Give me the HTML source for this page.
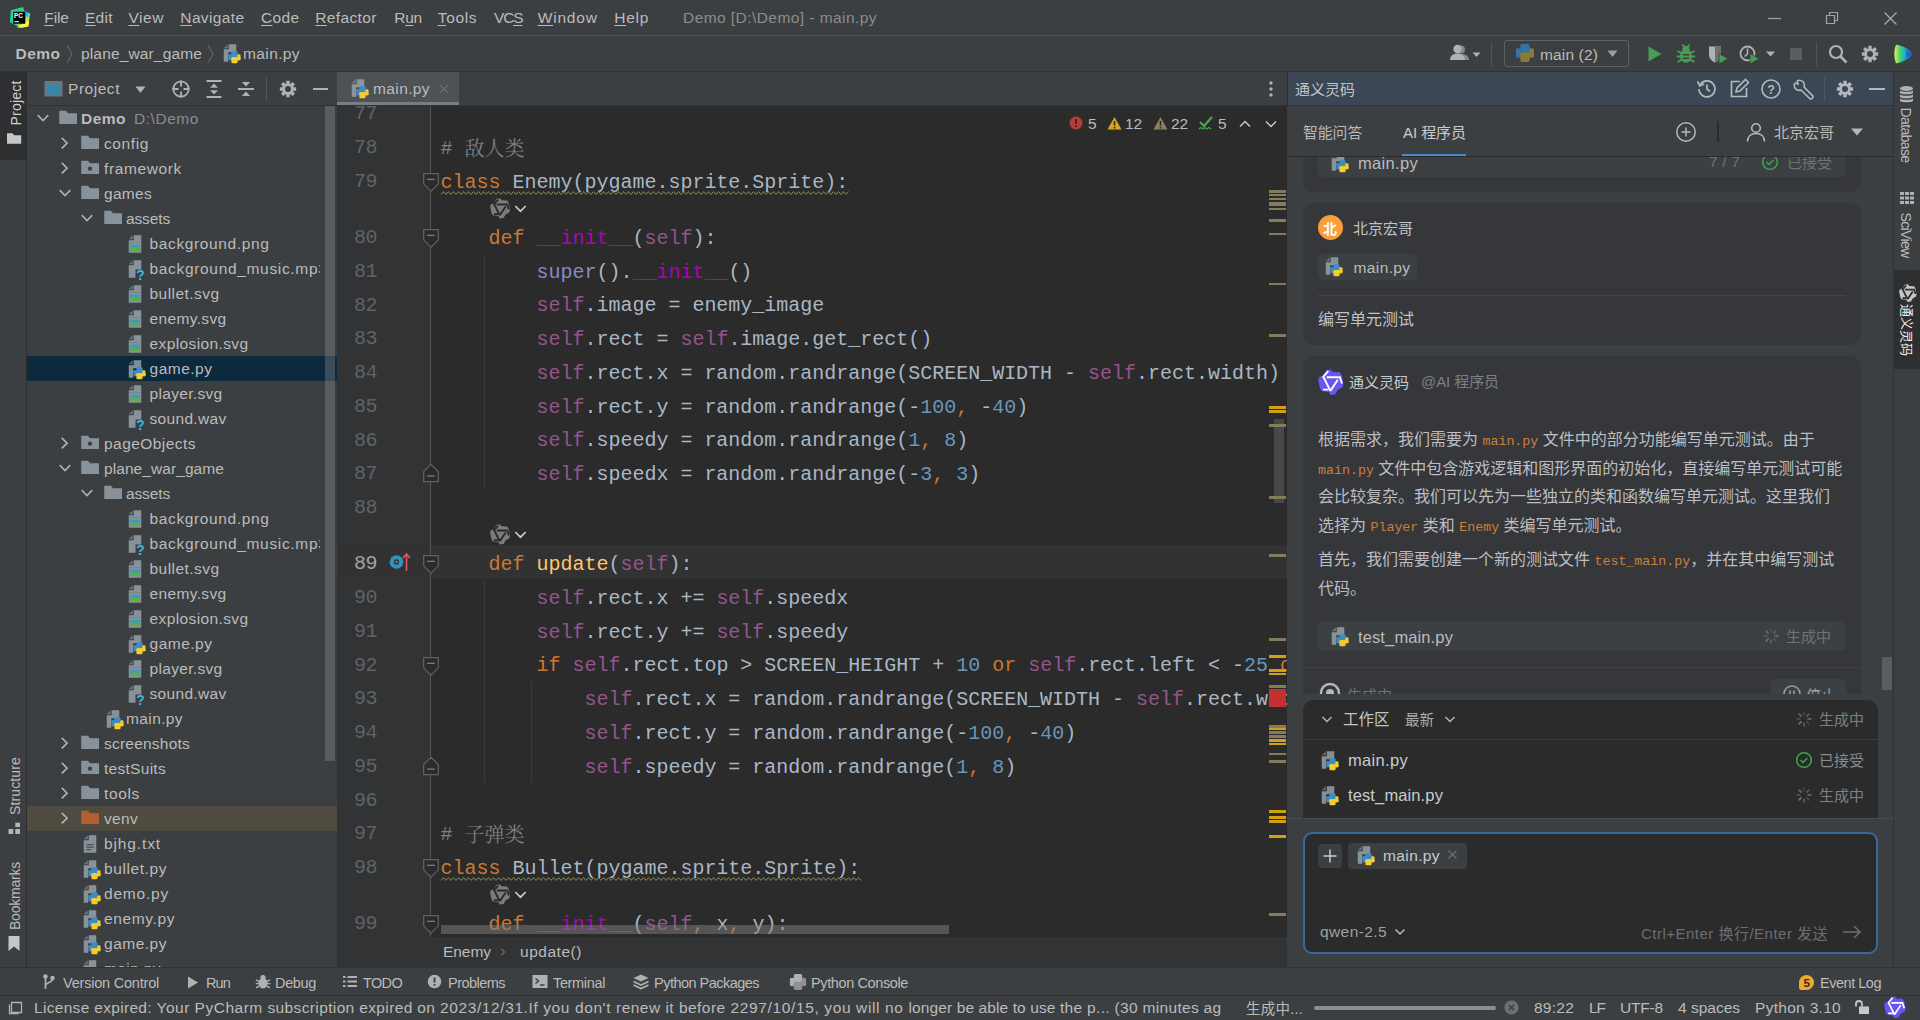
<!DOCTYPE html>
<html lang="zh"><head><meta charset="utf-8"><title>Demo [D:\Demo] - main.py</title>
<style>
html,body{margin:0;padding:0;background:#3c3f41;overflow:hidden}
body{width:1920px;height:1020px;position:relative;font-family:"Liberation Sans","Noto Sans CJK SC",sans-serif;color:#bbbbbb;font-size:16.4px}
.b{position:absolute}
.t{position:absolute;white-space:pre}
.i{position:absolute;overflow:visible}
.c{position:absolute;overflow:hidden}
u{text-decoration:underline;text-underline-offset:2px;text-decoration-thickness:1px}
.m{font-family:"Liberation Mono","Noto Serif CJK SC",monospace;font-size:20px;color:#a9b7c6}
.k{color:#cc7832}.s{color:#94558d}.d{color:#b200b2}.n{color:#6897bb}.f{color:#ffc66d}.bi{color:#8888c6}.cm{color:#808080}
.ln{position:absolute;left:0;width:40px;text-align:right;font-family:"Liberation Mono",monospace;font-size:20px;letter-spacing:-.5px;color:#606366;line-height:34px;height:34px}
.cl{position:absolute;left:103.6px;letter-spacing:-0.012px;white-space:pre;font-family:"Liberation Mono","Noto Serif CJK SC",monospace;font-size:20px;color:#a9b7c6;line-height:34px;height:34px}
.wv{text-decoration:underline wavy #8d8a5e;text-decoration-thickness:1px;text-underline-offset:5px;text-decoration-skip-ink:none}
.zh{position:relative;top:2px}
.ic{font-family:"Liberation Mono","Noto Serif CJK SC",monospace;font-size:13.3px;color:#c9803e}
.p{position:absolute;left:30px;width:540px;font-size:16px;line-height:28.7px;color:#bcbec4;white-space:pre}
</style></head>
<body>
<div class="b" style="left:0px;top:35px;width:1920px;height:1px;background:#505355;"></div>
<svg class="i" style="left:8.8px;top:7.4px" width="20.8" height="20.8" viewBox="0 0 22 22" ><defs><linearGradient id="pg1" x1="0" y1="0" x2="1" y2="1"><stop offset="0" stop-color="#21d789"/><stop offset=".55" stop-color="#21d789"/><stop offset=".75" stop-color="#b8e84e"/><stop offset="1" stop-color="#fcf84a"/></linearGradient></defs><path d="M2 3.500L15 0l1 4 5.500 2.500-1 13.500-8 2-11.500-6z" fill="url(#pg1)"/><path d="M16 4l5.500 2.500-.5 4-5-1z" fill="#07c3f2"/><path d="M8 21.500l12.500-6.500.5-8.500 1 .5-1.500 13.500-7.500 1.500z" fill="#fcf84a"/><rect x="4.500" y="5" width="12.700" height="12.700" fill="#000"/><text x="5.300" y="11.400" font-family="Liberation Sans,sans-serif" font-weight="700" font-size="6.800" fill="#fff">PC</text><rect x="5.800" y="15" width="4.600" height="1.100" fill="#fff"/></svg>
<span class="t" style="left:44.3px;top:6.0px;line-height:24px;font-size:15.5px;letter-spacing:-0.144px;color:#bbbbbb;"><u>F</u>ile</span>
<span class="t" style="left:85px;top:6.0px;line-height:24px;font-size:15.5px;letter-spacing:0.247px;color:#bbbbbb;"><u>E</u>dit</span>
<span class="t" style="left:128.5px;top:6.0px;line-height:24px;font-size:15.5px;letter-spacing:0.546px;color:#bbbbbb;"><u>V</u>iew</span>
<span class="t" style="left:180.3px;top:6.0px;line-height:24px;font-size:15.5px;letter-spacing:0.378px;color:#bbbbbb;"><u>N</u>avigate</span>
<span class="t" style="left:261px;top:6.0px;line-height:24px;font-size:15.5px;letter-spacing:0.311px;color:#bbbbbb;"><u>C</u>ode</span>
<span class="t" style="left:315.3px;top:6.0px;line-height:24px;font-size:15.5px;letter-spacing:0.352px;color:#bbbbbb;"><u>R</u>efactor</span>
<span class="t" style="left:394.3px;top:6.0px;line-height:24px;font-size:15.5px;letter-spacing:-0.345px;color:#bbbbbb;">R<u>u</u>n</span>
<span class="t" style="left:437.7px;top:6.0px;line-height:24px;font-size:15.5px;letter-spacing:0.683px;color:#bbbbbb;"><u>T</u>ools</span>
<span class="t" style="left:494px;top:6.0px;line-height:24px;font-size:15.5px;letter-spacing:-1.191px;color:#bbbbbb;">VC<u>S</u></span>
<span class="t" style="left:537.7px;top:6.0px;line-height:24px;font-size:15.5px;letter-spacing:0.812px;color:#bbbbbb;"><u>W</u>indow</span>
<span class="t" style="left:614.3px;top:6.0px;line-height:24px;font-size:15.5px;letter-spacing:0.705px;color:#bbbbbb;"><u>H</u>elp</span>
<span class="t" style="left:683px;top:6.0px;line-height:24px;font-size:15.5px;letter-spacing:0.439px;color:#8c8c8c;">Demo [D:\Demo] - main.py</span>
<svg class="i" style="left:1764px;top:8px" width="20" height="20" viewBox="0 0 20 20" ><path d="M4 10.500h13" stroke="#a0a3a5" stroke-width="1.200"/></svg>
<svg class="i" style="left:1822px;top:8px" width="20" height="20" viewBox="0 0 20 20" ><path d="M4.500 7.500h8v8h-8zM7.500 7.500v-3h8v8h-3" fill="none" stroke="#a0a3a5" stroke-width="1.200"/></svg>
<svg class="i" style="left:1880px;top:8px" width="20" height="20" viewBox="0 0 20 20" ><path d="M4.500 4.500l12 12M16.500 4.500l-12 12" stroke="#a8abad" stroke-width="1.200"/></svg>
<div class="b" style="left:0px;top:71px;width:1920px;height:1px;background:#323232;"></div>
<span class="t" style="left:15.5px;top:41.5px;line-height:24px;font-size:15.5px;letter-spacing:0.484px;color:#bbbbbb;font-weight:700;">Demo</span>
<svg class="i" style="left:64px;top:42px" width="12" height="24" viewBox="0 0 12 24" ><path d="M3 3l5 9-5 9" fill="none" stroke="#6b6e70" stroke-width="1"/></svg>
<span class="t" style="left:81px;top:41.5px;line-height:24px;font-size:15.5px;letter-spacing:0.149px;">plane_war_game</span>
<svg class="i" style="left:205px;top:42px" width="12" height="24" viewBox="0 0 12 24" ><path d="M3 3l5 9-5 9" fill="none" stroke="#6b6e70" stroke-width="1"/></svg>
<svg class="i" style="left:220px;top:42.5px" width="22.5" height="22.5" viewBox="0 0 18 18" ><path d="M7 1h6v6.400H6.600V15H3V5h4z" fill="#9aa7b0" fill-opacity=".8"/><path d="M6.200 1L3 4.200h3.200z" fill="#9aa7b0" fill-opacity=".5"/><rect x="9.10" y="6.60" width="4.99" height="4.90" rx="1.06" fill="#3d8cc4"/><rect x="6.80" y="9.00" width="7.30" height="2.50" rx="0.86" fill="#3d8cc4"/><rect x="6.80" y="9.00" width="2.59" height="4.90" rx="1.06" fill="#3d8cc4"/><rect x="9.10" y="11.30" width="4.99" height="4.90" rx="1.06" fill="#f6cd2e"/><rect x="9.10" y="11.30" width="7.30" height="2.50" rx="0.86" fill="#f6cd2e"/><rect x="13.81" y="8.90" width="2.59" height="4.90" rx="1.06" fill="#f6cd2e"/></svg>
<span class="t" style="left:243px;top:41.5px;line-height:24px;font-size:15.5px;letter-spacing:0.389px;">main.py</span>
<svg class="i" style="left:1449px;top:43px" width="34" height="22" viewBox="0 0 34 22" ><circle cx="12" cy="6.500" r="4" fill="#7f8b91"/><path d="M4 17c0-4.500 4-6 8-6s8 1.500 8 6z" fill="#7f8b91"/><circle cx="8.500" cy="6" r="4.200" fill="#afb1b3"/><path d="M1 17c0-4 3-6.500 7.500-6.500S16 13 16 17z" fill="#afb1b3"/><path d="M23.500 9.500h8l-4 4.500z" fill="#afb1b3"/></svg>
<div class="b" style="left:1491px;top:42px;width:1px;height:24px;background:#515355;"></div>
<div class="b" style="left:1504px;top:40px;width:125px;height:27px;border:1px solid #5e6163;border-radius:3px;box-sizing:border-box"></div>
<svg class="i" style="left:1515px;top:43px" width="20" height="20" viewBox="0 0 10 10" ><rect x="2.66" y="0.50" width="4.68" height="4.59" rx="0.99" fill="#3572a5"/><rect x="0.50" y="2.75" width="6.84" height="2.34" rx="0.81" fill="#3572a5"/><rect x="0.50" y="2.75" width="2.43" height="4.59" rx="0.99" fill="#3572a5"/><rect x="2.66" y="4.91" width="4.68" height="4.59" rx="0.99" fill="#8a7a33"/><rect x="2.66" y="4.91" width="6.84" height="2.34" rx="0.81" fill="#8a7a33"/><rect x="7.07" y="2.66" width="2.43" height="4.59" rx="0.99" fill="#8a7a33"/></svg>
<span class="t" style="left:1540px;top:43.0px;line-height:24px;font-size:15.5px;letter-spacing:0.144px;">main (2)</span>
<svg class="i" style="left:1606px;top:49px" width="14" height="10" viewBox="0 0 14 10" ><path d="M1.500 1.500h10L6.500 8z" fill="#9da0a2"/></svg>
<svg class="i" style="left:1645px;top:44px" width="20" height="20" viewBox="0 0 20 20" ><path d="M3.500 2.500l13 7.500-13 7.500z" fill="#499c54"/></svg>
<svg class="i" style="left:1675px;top:43px" width="22" height="22" viewBox="0 0 22 22" ><ellipse cx="11" cy="13" rx="6" ry="6.800" fill="#499c54"/><circle cx="11" cy="6.300" r="3.600" fill="#499c54"/><path d="M2.500 8l4.500 2.500M19.500 8L15 10.500M1.800 13.500h5M20.200 13.500h-5M2.500 19l4.500-2.500M19.500 19L15 16.500M7.300 1.500l2 2.500M14.700 1.500l-2 2.500" stroke="#499c54" stroke-width="2"/><path d="M7.800 11.800h6.400M7.800 15.200h6.400" stroke="#3c3f41" stroke-width="1.500"/></svg>
<svg class="i" style="left:1707px;top:43px" width="24" height="24" viewBox="0 0 24 24" ><path d="M2 3.500h12v8c0 4-3 6.500-6 8-3-1.500-6-4-6-8z" fill="#afb1b3"/><path d="M8 3.500h6v8c0 4-3 6.500-6 8z" fill="#6e7173"/><path d="M12 10.500l9 5.200-9 5.300z" fill="#499c54" stroke="#3c3f41" stroke-width=".8"/></svg>
<svg class="i" style="left:1738px;top:43px" width="24" height="24" viewBox="0 0 24 24" ><circle cx="9.500" cy="10.500" r="7" fill="none" stroke="#afb1b3" stroke-width="1.800"/><path d="M9.500 5.500v5.500l-3 2.500" fill="none" stroke="#afb1b3" stroke-width="1.600"/><path d="M12 10.500l9 5.200-9 5.300z" fill="#499c54" stroke="#3c3f41" stroke-width=".8"/></svg>
<svg class="i" style="left:1765px;top:50px" width="12" height="8" viewBox="0 0 12 8" ><path d="M1 1.500h9L5.500 6.500z" fill="#afb1b3"/></svg>
<div class="b" style="left:1790px;top:48px;width:12px;height:12px;background:#5a5d5f;"></div>
<div class="b" style="left:1816px;top:42px;width:1px;height:24px;background:#515355;"></div>
<svg class="i" style="left:1827px;top:43px" width="22" height="22" viewBox="0 0 22 22" ><circle cx="9" cy="9" r="6" fill="none" stroke="#afb1b3" stroke-width="2.200"/><path d="M13.500 13.500l6 6" stroke="#afb1b3" stroke-width="2.600"/></svg>
<svg class="i" style="left:1861px;top:45px" width="18" height="18" viewBox="0 0 20 20" ><rect x="8.100" y="0.900" width="3.800" height="4.500" rx=".5" fill="#afb1b3" transform="rotate(0 10 10)"/><rect x="8.100" y="0.900" width="3.800" height="4.500" rx=".5" fill="#afb1b3" transform="rotate(45 10 10)"/><rect x="8.100" y="0.900" width="3.800" height="4.500" rx=".5" fill="#afb1b3" transform="rotate(90 10 10)"/><rect x="8.100" y="0.900" width="3.800" height="4.500" rx=".5" fill="#afb1b3" transform="rotate(135 10 10)"/><rect x="8.100" y="0.900" width="3.800" height="4.500" rx=".5" fill="#afb1b3" transform="rotate(180 10 10)"/><rect x="8.100" y="0.900" width="3.800" height="4.500" rx=".5" fill="#afb1b3" transform="rotate(225 10 10)"/><rect x="8.100" y="0.900" width="3.800" height="4.500" rx=".5" fill="#afb1b3" transform="rotate(270 10 10)"/><rect x="8.100" y="0.900" width="3.800" height="4.500" rx=".5" fill="#afb1b3" transform="rotate(315 10 10)"/><circle cx="10" cy="10" r="6.500" fill="#afb1b3"/><circle cx="10" cy="10" r="3.300" fill="#3c3f41"/></svg>
<svg class="i" style="left:1893px;top:43px" width="22" height="22" viewBox="0 0 22 22" ><defs><linearGradient id="cg1" x1="0" y1="0" x2="1" y2="0"><stop offset="0" stop-color="#e6ee4c"/><stop offset=".35" stop-color="#35d07c"/><stop offset=".7" stop-color="#1c9fe0"/><stop offset="1" stop-color="#2a55c8"/></linearGradient></defs><path d="M3 1.800C9 2 18 7.500 19.500 11 18 14.500 9 20 3 20.200 .8 15 .8 7 3 1.800z" fill="url(#cg1)"/><path d="M12 5.500L19.500 11 12 16.500c1.500-3 1.500-8 0-11z" fill="#1d4fb8" fill-opacity=".55"/></svg>
<div class="b" style="left:0px;top:72px;width:26px;height:88px;background:#2d2f30;"></div>
<div class="b" style="left:26px;top:72px;width:1px;height:895px;background:#2b2d2e;"></div>
<span class="t" style="left:-7.5px;top:92.5px;line-height:20px;font-size:14px;letter-spacing:0.204px;color:#d0d2d3;transform:rotate(-90deg);transform-origin:50% 50%;width:45px;">Project</span>
<svg class="i" style="left:5px;top:130px" width="18" height="18" viewBox="0 0 16 16" ><path d="M1.800 2.800h4.800l1.500 1.800H14.400V12.200H1.800z" fill="#c4c6c8"/></svg>
<span class="t" style="left:-14.0px;top:776.0px;line-height:20px;font-size:14px;letter-spacing:0.133px;color:#bbbbbb;transform:rotate(-90deg);transform-origin:50% 50%;width:58px;">Structure</span>
<svg class="i" style="left:8px;top:822px" width="13" height="13" viewBox="0 0 13 13" ><rect x="7.300" y=".7" width="4.700" height="4.400" fill="#b2b4b6"/><rect x=".5" y="7" width="4.800" height="5" fill="#b2b4b6"/><rect x="7.300" y="7" width="4.700" height="5" fill="#b2b4b6"/></svg>
<span class="t" style="left:-19.0px;top:886.0px;line-height:20px;font-size:14px;letter-spacing:-0.225px;color:#bbbbbb;transform:rotate(-90deg);transform-origin:50% 50%;width:68px;">Bookmarks</span>
<svg class="i" style="left:7px;top:935px" width="14" height="17" viewBox="0 0 14 17" ><path d="M1.500 1h11v15l-5.500-4.500L1.500 16z" fill="#c4c6c8"/></svg>
<div class="b" style="left:28px;top:105px;width:309px;height:1px;background:#323232;"></div>
<svg class="i" style="left:44px;top:79px" width="22" height="20" viewBox="0 0 22 20" ><rect x=".5" y="2" width="18" height="15.500" fill="#6c767d"/><rect x="2.500" y="5.500" width="14" height="10" fill="#3488ae"/></svg>
<span class="t" style="left:68px;top:77.0px;line-height:24px;font-size:15.5px;letter-spacing:0.537px;color:#bbbbbb;">Project</span>
<svg class="i" style="left:134px;top:85px" width="14" height="10" viewBox="0 0 14 10" ><path d="M1.500 1.500h10L6.500 8z" fill="#afb1b3"/></svg>
<svg class="i" style="left:171px;top:79px" width="20" height="20" viewBox="0 0 20 20" ><circle cx="10" cy="10" r="7.700" fill="none" stroke="#afb1b3" stroke-width="1.800"/><path d="M10 1.500v6M10 12.500v6M1.500 10h6M12.500 10h6" stroke="#afb1b3" stroke-width="1.800"/></svg>
<svg class="i" style="left:204px;top:79px" width="20" height="20" viewBox="0 0 20 20" ><path d="M2.500 2h15M2.500 18h15" stroke="#afb1b3" stroke-width="2"/><path d="M10 4.500l4 4.200h-8zM10 15.500l4-4.200h-8z" fill="#afb1b3"/></svg>
<svg class="i" style="left:236px;top:79px" width="20" height="20" viewBox="0 0 20 20" ><path d="M2 10h16" stroke="#afb1b3" stroke-width="2"/><path d="M10 7.500l4.200-4.500h-8.400zM10 12.500l4.200 4.500h-8.400z" fill="#afb1b3"/></svg>
<div class="b" style="left:266px;top:77px;width:1px;height:24px;background:#515355;"></div>
<svg class="i" style="left:279px;top:80px" width="18" height="18" viewBox="0 0 20 20" ><rect x="8.100" y="0.900" width="3.800" height="4.500" rx=".5" fill="#afb1b3" transform="rotate(0 10 10)"/><rect x="8.100" y="0.900" width="3.800" height="4.500" rx=".5" fill="#afb1b3" transform="rotate(45 10 10)"/><rect x="8.100" y="0.900" width="3.800" height="4.500" rx=".5" fill="#afb1b3" transform="rotate(90 10 10)"/><rect x="8.100" y="0.900" width="3.800" height="4.500" rx=".5" fill="#afb1b3" transform="rotate(135 10 10)"/><rect x="8.100" y="0.900" width="3.800" height="4.500" rx=".5" fill="#afb1b3" transform="rotate(180 10 10)"/><rect x="8.100" y="0.900" width="3.800" height="4.500" rx=".5" fill="#afb1b3" transform="rotate(225 10 10)"/><rect x="8.100" y="0.900" width="3.800" height="4.500" rx=".5" fill="#afb1b3" transform="rotate(270 10 10)"/><rect x="8.100" y="0.900" width="3.800" height="4.500" rx=".5" fill="#afb1b3" transform="rotate(315 10 10)"/><circle cx="10" cy="10" r="6.500" fill="#afb1b3"/><circle cx="10" cy="10" r="3.300" fill="#3c3f41"/></svg>
<svg class="i" style="left:311px;top:79px" width="20" height="20" viewBox="0 0 20 20" ><path d="M2 10h15" stroke="#afb1b3" stroke-width="2"/></svg>
<div class="c" style="left:27px;top:106px;width:310px;height:861px"><div class="b" style="left:1px;top:0">
<div class="b" style="left:-1px;top:250px;width:310px;height:25px;background:#0d293e;"></div>
<div class="b" style="left:-1px;top:700px;width:310px;height:25px;background:#4f4b41;"></div>
<svg class="i" style="left:3.5px;top:1.7px" width="20" height="20" viewBox="0 0 16 16" ><path d="M4.600 5.700L8.800 10 13 5.700" fill="none" stroke="#aeb0b2" stroke-width="1.3"/></svg>
<svg class="i" style="left:29.75px;top:1.3px" width="20" height="20" viewBox="0 0 16 16" ><path d="M1 3h5.400l1.600 2H15.200v8.500H1z" fill="#9aa7b0" fill-opacity=".8"/></svg>
<span class="t" style="left:53px;top:0.5px;line-height:24px;font-size:15.5px;letter-spacing:0.484px;font-weight:700;">Demo</span>
<span class="t" style="left:106px;top:0.5px;line-height:24px;font-size:15.5px;letter-spacing:0.55px;color:#8a8d8f;">D:\Demo</span>
<svg class="i" style="left:26px;top:26.7px" width="20" height="20" viewBox="0 0 16 16" ><path d="M6.200 3.900L10.500 8.100 6.200 12.300" fill="none" stroke="#aeb0b2" stroke-width="1.3"/></svg>
<svg class="i" style="left:51.75px;top:26.3px" width="20" height="20" viewBox="0 0 16 16" ><path d="M1 3h5.400l1.600 2H15.200v8.500H1z" fill="#9aa7b0" fill-opacity=".8"/></svg>
<span class="t" style="left:76px;top:25.5px;line-height:24px;font-size:15.5px;letter-spacing:0.606px;">config</span>
<svg class="i" style="left:26px;top:51.7px" width="20" height="20" viewBox="0 0 16 16" ><path d="M6.200 3.900L10.500 8.100 6.200 12.300" fill="none" stroke="#aeb0b2" stroke-width="1.3"/></svg>
<svg class="i" style="left:51.75px;top:51.3px" width="20" height="20" viewBox="0 0 16 16" ><path d="M1 3h5.400l1.600 2H15.200v8.500H1z" fill="#9aa7b0" fill-opacity=".8"/><circle cx="8" cy="9.300" r="1.700" fill="#3c3f41"/></svg>
<span class="t" style="left:76px;top:50.5px;line-height:24px;font-size:15.5px;letter-spacing:0.628px;">framework</span>
<svg class="i" style="left:26px;top:76.7px" width="20" height="20" viewBox="0 0 16 16" ><path d="M4.600 5.700L8.800 10 13 5.700" fill="none" stroke="#aeb0b2" stroke-width="1.3"/></svg>
<svg class="i" style="left:51.75px;top:76.3px" width="20" height="20" viewBox="0 0 16 16" ><path d="M1 3h5.400l1.600 2H15.200v8.500H1z" fill="#9aa7b0" fill-opacity=".8"/></svg>
<span class="t" style="left:76px;top:75.5px;line-height:24px;font-size:15.5px;letter-spacing:0.295px;">games</span>
<svg class="i" style="left:48px;top:101.7px" width="20" height="20" viewBox="0 0 16 16" ><path d="M4.600 5.700L8.800 10 13 5.700" fill="none" stroke="#aeb0b2" stroke-width="1.3"/></svg>
<svg class="i" style="left:74.75px;top:101.3px" width="20" height="20" viewBox="0 0 16 16" ><path d="M1 3h5.400l1.600 2H15.200v8.500H1z" fill="#9aa7b0" fill-opacity=".8"/></svg>
<span class="t" style="left:98px;top:100.5px;line-height:24px;font-size:15.5px;letter-spacing:-0.133px;">assets</span>
<svg class="i" style="left:97px;top:127.5px" width="20" height="20" viewBox="0 0 16 16" ><path d="M7 1h6v6H3V5h4z" fill="#9aa7b0" fill-opacity=".8"/><path d="M6.200 1L3 4.200h3.200z" fill="#9aa7b0" fill-opacity=".5"/><rect x="3" y="7" width="10" height="8" fill="#9aa7b0" fill-opacity=".8"/><rect x="4.300" y="8.600" width="7.500" height="5" fill="#3a9ac4"/><path d="M4.300 13.600v-2.200l2.300-1.500L9 11.400l1.400-.8 1.400 1.300v1.700z" fill="#5fae43"/></svg>
<span class="t" style="left:121.5px;top:125.5px;line-height:24px;font-size:15.5px;letter-spacing:0.63px;">background.png</span>
<svg class="i" style="left:97px;top:152.5px" width="22.5" height="22.5" viewBox="0 0 18 18" ><path d="M7 1h6v7.400H8.400V15H3V5h4z" fill="#9aa7b0" fill-opacity=".8"/><path d="M6.200 1L3 4.200h3.200z" fill="#9aa7b0" fill-opacity=".5"/><text x="9" y="17" font-family="Liberation Sans,sans-serif" font-weight="700" font-size="11" fill="#40b6e0">?</text></svg>
<span class="t" style="left:121.5px;top:150.5px;line-height:24px;font-size:15.5px;letter-spacing:0.672px;">background_music.mp3</span>
<svg class="i" style="left:97px;top:177.5px" width="20" height="20" viewBox="0 0 16 16" ><path d="M7 1h6v6H3V5h4z" fill="#9aa7b0" fill-opacity=".8"/><path d="M6.200 1L3 4.200h3.200z" fill="#9aa7b0" fill-opacity=".5"/><rect x="3" y="7" width="10" height="8" fill="#9aa7b0" fill-opacity=".8"/><rect x="4.300" y="8.600" width="7.500" height="5" fill="#3a9ac4"/><path d="M4.300 13.600v-2.200l2.300-1.500L9 11.400l1.400-.8 1.400 1.300v1.700z" fill="#5fae43"/></svg>
<span class="t" style="left:121.5px;top:175.5px;line-height:24px;font-size:15.5px;letter-spacing:0.452px;">bullet.svg</span>
<svg class="i" style="left:97px;top:202.5px" width="20" height="20" viewBox="0 0 16 16" ><path d="M7 1h6v6H3V5h4z" fill="#9aa7b0" fill-opacity=".8"/><path d="M6.200 1L3 4.200h3.200z" fill="#9aa7b0" fill-opacity=".5"/><rect x="3" y="7" width="10" height="8" fill="#9aa7b0" fill-opacity=".8"/><rect x="4.300" y="8.600" width="7.500" height="5" fill="#3a9ac4"/><path d="M4.300 13.600v-2.200l2.300-1.500L9 11.400l1.400-.8 1.400 1.300v1.700z" fill="#5fae43"/></svg>
<span class="t" style="left:121.5px;top:200.5px;line-height:24px;font-size:15.5px;letter-spacing:0.356px;">enemy.svg</span>
<svg class="i" style="left:97px;top:227.5px" width="20" height="20" viewBox="0 0 16 16" ><path d="M7 1h6v6H3V5h4z" fill="#9aa7b0" fill-opacity=".8"/><path d="M6.200 1L3 4.200h3.200z" fill="#9aa7b0" fill-opacity=".5"/><rect x="3" y="7" width="10" height="8" fill="#9aa7b0" fill-opacity=".8"/><rect x="4.300" y="8.600" width="7.500" height="5" fill="#3a9ac4"/><path d="M4.300 13.600v-2.200l2.300-1.500L9 11.400l1.400-.8 1.400 1.300v1.700z" fill="#5fae43"/></svg>
<span class="t" style="left:121.5px;top:225.5px;line-height:24px;font-size:15.5px;letter-spacing:0.391px;">explosion.svg</span>
<svg class="i" style="left:97px;top:252.5px" width="22.5" height="22.5" viewBox="0 0 18 18" ><path d="M7 1h6v6.400H6.600V15H3V5h4z" fill="#9aa7b0" fill-opacity=".8"/><path d="M6.200 1L3 4.200h3.200z" fill="#9aa7b0" fill-opacity=".5"/><rect x="9.10" y="6.60" width="4.99" height="4.90" rx="1.06" fill="#3d8cc4"/><rect x="6.80" y="9.00" width="7.30" height="2.50" rx="0.86" fill="#3d8cc4"/><rect x="6.80" y="9.00" width="2.59" height="4.90" rx="1.06" fill="#3d8cc4"/><rect x="9.10" y="11.30" width="4.99" height="4.90" rx="1.06" fill="#f6cd2e"/><rect x="9.10" y="11.30" width="7.30" height="2.50" rx="0.86" fill="#f6cd2e"/><rect x="13.81" y="8.90" width="2.59" height="4.90" rx="1.06" fill="#f6cd2e"/></svg>
<span class="t" style="left:121.5px;top:250.5px;line-height:24px;font-size:15.5px;letter-spacing:0.507px;">game.py</span>
<svg class="i" style="left:97px;top:277.5px" width="20" height="20" viewBox="0 0 16 16" ><path d="M7 1h6v6H3V5h4z" fill="#9aa7b0" fill-opacity=".8"/><path d="M6.200 1L3 4.200h3.200z" fill="#9aa7b0" fill-opacity=".5"/><rect x="3" y="7" width="10" height="8" fill="#9aa7b0" fill-opacity=".8"/><rect x="4.300" y="8.600" width="7.500" height="5" fill="#3a9ac4"/><path d="M4.300 13.600v-2.200l2.300-1.500L9 11.400l1.400-.8 1.400 1.300v1.700z" fill="#5fae43"/></svg>
<span class="t" style="left:121.5px;top:275.5px;line-height:24px;font-size:15.5px;letter-spacing:0.321px;">player.svg</span>
<svg class="i" style="left:97px;top:302.5px" width="22.5" height="22.5" viewBox="0 0 18 18" ><path d="M7 1h6v7.400H8.400V15H3V5h4z" fill="#9aa7b0" fill-opacity=".8"/><path d="M6.200 1L3 4.200h3.200z" fill="#9aa7b0" fill-opacity=".5"/><text x="9" y="17" font-family="Liberation Sans,sans-serif" font-weight="700" font-size="11" fill="#40b6e0">?</text></svg>
<span class="t" style="left:121.5px;top:300.5px;line-height:24px;font-size:15.5px;letter-spacing:0.322px;">sound.wav</span>
<svg class="i" style="left:26px;top:326.7px" width="20" height="20" viewBox="0 0 16 16" ><path d="M6.200 3.900L10.500 8.100 6.200 12.300" fill="none" stroke="#aeb0b2" stroke-width="1.3"/></svg>
<svg class="i" style="left:51.75px;top:326.3px" width="20" height="20" viewBox="0 0 16 16" ><path d="M1 3h5.400l1.600 2H15.200v8.500H1z" fill="#9aa7b0" fill-opacity=".8"/><circle cx="8" cy="9.300" r="1.700" fill="#3c3f41"/></svg>
<span class="t" style="left:76px;top:325.5px;line-height:24px;font-size:15.5px;letter-spacing:0.452px;">pageObjects</span>
<svg class="i" style="left:26px;top:351.7px" width="20" height="20" viewBox="0 0 16 16" ><path d="M4.600 5.700L8.800 10 13 5.700" fill="none" stroke="#aeb0b2" stroke-width="1.3"/></svg>
<svg class="i" style="left:51.75px;top:351.3px" width="20" height="20" viewBox="0 0 16 16" ><path d="M1 3h5.400l1.600 2H15.200v8.500H1z" fill="#9aa7b0" fill-opacity=".8"/></svg>
<span class="t" style="left:76px;top:350.5px;line-height:24px;font-size:15.5px;letter-spacing:0.078px;">plane_war_game</span>
<svg class="i" style="left:48px;top:376.7px" width="20" height="20" viewBox="0 0 16 16" ><path d="M4.600 5.700L8.800 10 13 5.700" fill="none" stroke="#aeb0b2" stroke-width="1.3"/></svg>
<svg class="i" style="left:74.75px;top:376.3px" width="20" height="20" viewBox="0 0 16 16" ><path d="M1 3h5.400l1.600 2H15.200v8.500H1z" fill="#9aa7b0" fill-opacity=".8"/></svg>
<span class="t" style="left:98px;top:375.5px;line-height:24px;font-size:15.5px;letter-spacing:-0.133px;">assets</span>
<svg class="i" style="left:97px;top:402.5px" width="20" height="20" viewBox="0 0 16 16" ><path d="M7 1h6v6H3V5h4z" fill="#9aa7b0" fill-opacity=".8"/><path d="M6.200 1L3 4.200h3.200z" fill="#9aa7b0" fill-opacity=".5"/><rect x="3" y="7" width="10" height="8" fill="#9aa7b0" fill-opacity=".8"/><rect x="4.300" y="8.600" width="7.500" height="5" fill="#3a9ac4"/><path d="M4.300 13.600v-2.200l2.300-1.500L9 11.400l1.400-.8 1.400 1.300v1.700z" fill="#5fae43"/></svg>
<span class="t" style="left:121.5px;top:400.5px;line-height:24px;font-size:15.5px;letter-spacing:0.63px;">background.png</span>
<svg class="i" style="left:97px;top:427.5px" width="22.5" height="22.5" viewBox="0 0 18 18" ><path d="M7 1h6v7.400H8.400V15H3V5h4z" fill="#9aa7b0" fill-opacity=".8"/><path d="M6.200 1L3 4.200h3.200z" fill="#9aa7b0" fill-opacity=".5"/><text x="9" y="17" font-family="Liberation Sans,sans-serif" font-weight="700" font-size="11" fill="#40b6e0">?</text></svg>
<span class="t" style="left:121.5px;top:425.5px;line-height:24px;font-size:15.5px;letter-spacing:0.672px;">background_music.mp3</span>
<svg class="i" style="left:97px;top:452.5px" width="20" height="20" viewBox="0 0 16 16" ><path d="M7 1h6v6H3V5h4z" fill="#9aa7b0" fill-opacity=".8"/><path d="M6.200 1L3 4.200h3.200z" fill="#9aa7b0" fill-opacity=".5"/><rect x="3" y="7" width="10" height="8" fill="#9aa7b0" fill-opacity=".8"/><rect x="4.300" y="8.600" width="7.500" height="5" fill="#3a9ac4"/><path d="M4.300 13.600v-2.200l2.300-1.500L9 11.400l1.400-.8 1.400 1.300v1.700z" fill="#5fae43"/></svg>
<span class="t" style="left:121.5px;top:450.5px;line-height:24px;font-size:15.5px;letter-spacing:0.452px;">bullet.svg</span>
<svg class="i" style="left:97px;top:477.5px" width="20" height="20" viewBox="0 0 16 16" ><path d="M7 1h6v6H3V5h4z" fill="#9aa7b0" fill-opacity=".8"/><path d="M6.200 1L3 4.200h3.200z" fill="#9aa7b0" fill-opacity=".5"/><rect x="3" y="7" width="10" height="8" fill="#9aa7b0" fill-opacity=".8"/><rect x="4.300" y="8.600" width="7.500" height="5" fill="#3a9ac4"/><path d="M4.300 13.600v-2.200l2.300-1.500L9 11.400l1.400-.8 1.400 1.300v1.700z" fill="#5fae43"/></svg>
<span class="t" style="left:121.5px;top:475.5px;line-height:24px;font-size:15.5px;letter-spacing:0.356px;">enemy.svg</span>
<svg class="i" style="left:97px;top:502.5px" width="20" height="20" viewBox="0 0 16 16" ><path d="M7 1h6v6H3V5h4z" fill="#9aa7b0" fill-opacity=".8"/><path d="M6.200 1L3 4.200h3.200z" fill="#9aa7b0" fill-opacity=".5"/><rect x="3" y="7" width="10" height="8" fill="#9aa7b0" fill-opacity=".8"/><rect x="4.300" y="8.600" width="7.500" height="5" fill="#3a9ac4"/><path d="M4.300 13.600v-2.200l2.300-1.500L9 11.400l1.400-.8 1.400 1.300v1.700z" fill="#5fae43"/></svg>
<span class="t" style="left:121.5px;top:500.5px;line-height:24px;font-size:15.5px;letter-spacing:0.391px;">explosion.svg</span>
<svg class="i" style="left:97px;top:527.5px" width="22.5" height="22.5" viewBox="0 0 18 18" ><path d="M7 1h6v6.400H6.600V15H3V5h4z" fill="#9aa7b0" fill-opacity=".8"/><path d="M6.200 1L3 4.200h3.200z" fill="#9aa7b0" fill-opacity=".5"/><rect x="9.10" y="6.60" width="4.99" height="4.90" rx="1.06" fill="#3d8cc4"/><rect x="6.80" y="9.00" width="7.30" height="2.50" rx="0.86" fill="#3d8cc4"/><rect x="6.80" y="9.00" width="2.59" height="4.90" rx="1.06" fill="#3d8cc4"/><rect x="9.10" y="11.30" width="4.99" height="4.90" rx="1.06" fill="#f6cd2e"/><rect x="9.10" y="11.30" width="7.30" height="2.50" rx="0.86" fill="#f6cd2e"/><rect x="13.81" y="8.90" width="2.59" height="4.90" rx="1.06" fill="#f6cd2e"/></svg>
<span class="t" style="left:121.5px;top:525.5px;line-height:24px;font-size:15.5px;letter-spacing:0.507px;">game.py</span>
<svg class="i" style="left:97px;top:552.5px" width="20" height="20" viewBox="0 0 16 16" ><path d="M7 1h6v6H3V5h4z" fill="#9aa7b0" fill-opacity=".8"/><path d="M6.200 1L3 4.200h3.200z" fill="#9aa7b0" fill-opacity=".5"/><rect x="3" y="7" width="10" height="8" fill="#9aa7b0" fill-opacity=".8"/><rect x="4.300" y="8.600" width="7.500" height="5" fill="#3a9ac4"/><path d="M4.300 13.600v-2.200l2.300-1.500L9 11.400l1.400-.8 1.400 1.300v1.700z" fill="#5fae43"/></svg>
<span class="t" style="left:121.5px;top:550.5px;line-height:24px;font-size:15.5px;letter-spacing:0.321px;">player.svg</span>
<svg class="i" style="left:97px;top:577.5px" width="22.5" height="22.5" viewBox="0 0 18 18" ><path d="M7 1h6v7.400H8.400V15H3V5h4z" fill="#9aa7b0" fill-opacity=".8"/><path d="M6.200 1L3 4.200h3.200z" fill="#9aa7b0" fill-opacity=".5"/><text x="9" y="17" font-family="Liberation Sans,sans-serif" font-weight="700" font-size="11" fill="#40b6e0">?</text></svg>
<span class="t" style="left:121.5px;top:575.5px;line-height:24px;font-size:15.5px;letter-spacing:0.322px;">sound.wav</span>
<svg class="i" style="left:74.5px;top:602.5px" width="22.5" height="22.5" viewBox="0 0 18 18" ><path d="M7 1h6v6.400H6.600V15H3V5h4z" fill="#9aa7b0" fill-opacity=".8"/><path d="M6.200 1L3 4.200h3.200z" fill="#9aa7b0" fill-opacity=".5"/><rect x="9.10" y="6.60" width="4.99" height="4.90" rx="1.06" fill="#3d8cc4"/><rect x="6.80" y="9.00" width="7.30" height="2.50" rx="0.86" fill="#3d8cc4"/><rect x="6.80" y="9.00" width="2.59" height="4.90" rx="1.06" fill="#3d8cc4"/><rect x="9.10" y="11.30" width="4.99" height="4.90" rx="1.06" fill="#f6cd2e"/><rect x="9.10" y="11.30" width="7.30" height="2.50" rx="0.86" fill="#f6cd2e"/><rect x="13.81" y="8.90" width="2.59" height="4.90" rx="1.06" fill="#f6cd2e"/></svg>
<span class="t" style="left:98px;top:600.5px;line-height:24px;font-size:15.5px;letter-spacing:0.389px;">main.py</span>
<svg class="i" style="left:26px;top:626.7px" width="20" height="20" viewBox="0 0 16 16" ><path d="M6.200 3.900L10.500 8.100 6.200 12.300" fill="none" stroke="#aeb0b2" stroke-width="1.3"/></svg>
<svg class="i" style="left:51.75px;top:626.3px" width="20" height="20" viewBox="0 0 16 16" ><path d="M1 3h5.400l1.600 2H15.200v8.500H1z" fill="#9aa7b0" fill-opacity=".8"/></svg>
<span class="t" style="left:76px;top:625.5px;line-height:24px;font-size:15.5px;letter-spacing:0.221px;">screenshots</span>
<svg class="i" style="left:26px;top:651.7px" width="20" height="20" viewBox="0 0 16 16" ><path d="M6.200 3.900L10.500 8.100 6.200 12.300" fill="none" stroke="#aeb0b2" stroke-width="1.3"/></svg>
<svg class="i" style="left:51.75px;top:651.3px" width="20" height="20" viewBox="0 0 16 16" ><path d="M1 3h5.400l1.600 2H15.200v8.500H1z" fill="#9aa7b0" fill-opacity=".8"/><circle cx="8" cy="9.300" r="1.700" fill="#3c3f41"/></svg>
<span class="t" style="left:76px;top:650.5px;line-height:24px;font-size:15.5px;letter-spacing:0.284px;">testSuits</span>
<svg class="i" style="left:26px;top:676.7px" width="20" height="20" viewBox="0 0 16 16" ><path d="M6.200 3.900L10.500 8.100 6.200 12.300" fill="none" stroke="#aeb0b2" stroke-width="1.3"/></svg>
<svg class="i" style="left:51.75px;top:676.3px" width="20" height="20" viewBox="0 0 16 16" ><path d="M1 3h5.400l1.600 2H15.200v8.500H1z" fill="#9aa7b0" fill-opacity=".8"/></svg>
<span class="t" style="left:76px;top:675.5px;line-height:24px;font-size:15.5px;letter-spacing:0.652px;">tools</span>
<svg class="i" style="left:26px;top:701.7px" width="20" height="20" viewBox="0 0 16 16" ><path d="M6.200 3.900L10.500 8.100 6.200 12.300" fill="none" stroke="#aeb0b2" stroke-width="1.3"/></svg>
<svg class="i" style="left:51.75px;top:701.3px" width="20" height="20" viewBox="0 0 16 16" ><path d="M1 3h5.400l1.600 2H15.200v8.500H1z" fill="#b35f30" fill-opacity="1"/></svg>
<span class="t" style="left:76px;top:700.5px;line-height:24px;font-size:15.5px;letter-spacing:0.315px;">venv</span>
<svg class="i" style="left:52.2px;top:727.5px" width="20" height="20" viewBox="0 0 16 16" ><path d="M7 1h6v14H3V5h4z" fill="#9aa7b0" fill-opacity=".8"/><path d="M6.200 1L3 4.200h3.200z" fill="#9aa7b0" fill-opacity=".5"/><path d="M5 8.400h6M5 10.400h6M5 12.400h3.800" stroke="#4a4f54" stroke-width="1"/></svg>
<span class="t" style="left:76px;top:725.5px;line-height:24px;font-size:15.5px;letter-spacing:0.878px;">bjhg.txt</span>
<svg class="i" style="left:52.2px;top:752.5px" width="22.5" height="22.5" viewBox="0 0 18 18" ><path d="M7 1h6v6.400H6.600V15H3V5h4z" fill="#9aa7b0" fill-opacity=".8"/><path d="M6.200 1L3 4.200h3.200z" fill="#9aa7b0" fill-opacity=".5"/><rect x="9.10" y="6.60" width="4.99" height="4.90" rx="1.06" fill="#3d8cc4"/><rect x="6.80" y="9.00" width="7.30" height="2.50" rx="0.86" fill="#3d8cc4"/><rect x="6.80" y="9.00" width="2.59" height="4.90" rx="1.06" fill="#3d8cc4"/><rect x="9.10" y="11.30" width="4.99" height="4.90" rx="1.06" fill="#f6cd2e"/><rect x="9.10" y="11.30" width="7.30" height="2.50" rx="0.86" fill="#f6cd2e"/><rect x="13.81" y="8.90" width="2.59" height="4.90" rx="1.06" fill="#f6cd2e"/></svg>
<span class="t" style="left:76px;top:750.5px;line-height:24px;font-size:15.5px;letter-spacing:0.585px;">bullet.py</span>
<svg class="i" style="left:52.2px;top:777.5px" width="22.5" height="22.5" viewBox="0 0 18 18" ><path d="M7 1h6v6.400H6.600V15H3V5h4z" fill="#9aa7b0" fill-opacity=".8"/><path d="M6.200 1L3 4.200h3.200z" fill="#9aa7b0" fill-opacity=".5"/><rect x="9.10" y="6.60" width="4.99" height="4.90" rx="1.06" fill="#3d8cc4"/><rect x="6.80" y="9.00" width="7.30" height="2.50" rx="0.86" fill="#3d8cc4"/><rect x="6.80" y="9.00" width="2.59" height="4.90" rx="1.06" fill="#3d8cc4"/><rect x="9.10" y="11.30" width="4.99" height="4.90" rx="1.06" fill="#f6cd2e"/><rect x="9.10" y="11.30" width="7.30" height="2.50" rx="0.86" fill="#f6cd2e"/><rect x="13.81" y="8.90" width="2.59" height="4.90" rx="1.06" fill="#f6cd2e"/></svg>
<span class="t" style="left:76px;top:775.5px;line-height:24px;font-size:15.5px;letter-spacing:0.793px;">demo.py</span>
<svg class="i" style="left:52.2px;top:802.5px" width="22.5" height="22.5" viewBox="0 0 18 18" ><path d="M7 1h6v6.400H6.600V15H3V5h4z" fill="#9aa7b0" fill-opacity=".8"/><path d="M6.200 1L3 4.200h3.200z" fill="#9aa7b0" fill-opacity=".5"/><rect x="9.10" y="6.60" width="4.99" height="4.90" rx="1.06" fill="#3d8cc4"/><rect x="6.80" y="9.00" width="7.30" height="2.50" rx="0.86" fill="#3d8cc4"/><rect x="6.80" y="9.00" width="2.59" height="4.90" rx="1.06" fill="#3d8cc4"/><rect x="9.10" y="11.30" width="4.99" height="4.90" rx="1.06" fill="#f6cd2e"/><rect x="9.10" y="11.30" width="7.30" height="2.50" rx="0.86" fill="#f6cd2e"/><rect x="13.81" y="8.90" width="2.59" height="4.90" rx="1.06" fill="#f6cd2e"/></svg>
<span class="t" style="left:76px;top:800.5px;line-height:24px;font-size:15.5px;letter-spacing:0.619px;">enemy.py</span>
<svg class="i" style="left:52.2px;top:827.5px" width="22.5" height="22.5" viewBox="0 0 18 18" ><path d="M7 1h6v6.400H6.600V15H3V5h4z" fill="#9aa7b0" fill-opacity=".8"/><path d="M6.200 1L3 4.200h3.200z" fill="#9aa7b0" fill-opacity=".5"/><rect x="9.10" y="6.60" width="4.99" height="4.90" rx="1.06" fill="#3d8cc4"/><rect x="6.80" y="9.00" width="7.30" height="2.50" rx="0.86" fill="#3d8cc4"/><rect x="6.80" y="9.00" width="2.59" height="4.90" rx="1.06" fill="#3d8cc4"/><rect x="9.10" y="11.30" width="4.99" height="4.90" rx="1.06" fill="#f6cd2e"/><rect x="9.10" y="11.30" width="7.30" height="2.50" rx="0.86" fill="#f6cd2e"/><rect x="13.81" y="8.90" width="2.59" height="4.90" rx="1.06" fill="#f6cd2e"/></svg>
<span class="t" style="left:76px;top:825.5px;line-height:24px;font-size:15.5px;letter-spacing:0.507px;">game.py</span>
<svg class="i" style="left:52.2px;top:852.5px" width="22.5" height="22.5" viewBox="0 0 18 18" ><path d="M7 1h6v6.400H6.600V15H3V5h4z" fill="#9aa7b0" fill-opacity=".8"/><path d="M6.200 1L3 4.200h3.200z" fill="#9aa7b0" fill-opacity=".5"/><rect x="9.10" y="6.60" width="4.99" height="4.90" rx="1.06" fill="#3d8cc4"/><rect x="6.80" y="9.00" width="7.30" height="2.50" rx="0.86" fill="#3d8cc4"/><rect x="6.80" y="9.00" width="2.59" height="4.90" rx="1.06" fill="#3d8cc4"/><rect x="9.10" y="11.30" width="4.99" height="4.90" rx="1.06" fill="#f6cd2e"/><rect x="9.10" y="11.30" width="7.30" height="2.50" rx="0.86" fill="#f6cd2e"/><rect x="13.81" y="8.90" width="2.59" height="4.90" rx="1.06" fill="#f6cd2e"/></svg>
<span class="t" style="left:76px;top:850.5px;line-height:24px;font-size:15.5px;letter-spacing:0.389px;">main.py</span>
<div class="b" style="left:292px;top:0px;width:17px;height:861px;background:#3c3f41;"></div>
<div class="b" style="left:292px;top:250px;width:17px;height:25px;background:#0d293e;"></div>
<div class="b" style="left:292px;top:700px;width:17px;height:25px;background:#4f4b41;"></div>
<div class="b" style="left:297px;top:0px;width:10px;height:655px;background:rgba(140,140,140,.36);"></div>
</div></div>
<div class="b" style="left:337px;top:72px;width:950px;height:33px;background:#3c3f41;"></div>
<div class="b" style="left:337px;top:72px;width:122px;height:33px;background:#4e5254;"></div>
<div class="b" style="left:337px;top:102px;width:122px;height:3.5px;background:#7a7e82;"></div>
<div class="b" style="left:337px;top:105px;width:951px;height:1px;background:#323232;"></div>
<svg class="i" style="left:347.5px;top:78px" width="22.5" height="22.5" viewBox="0 0 18 18" ><path d="M7 1h6v6.400H6.600V15H3V5h4z" fill="#9aa7b0" fill-opacity=".8"/><path d="M6.200 1L3 4.200h3.200z" fill="#9aa7b0" fill-opacity=".5"/><rect x="9.10" y="6.60" width="4.99" height="4.90" rx="1.06" fill="#3d8cc4"/><rect x="6.80" y="9.00" width="7.30" height="2.50" rx="0.86" fill="#3d8cc4"/><rect x="6.80" y="9.00" width="2.59" height="4.90" rx="1.06" fill="#3d8cc4"/><rect x="9.10" y="11.30" width="4.99" height="4.90" rx="1.06" fill="#f6cd2e"/><rect x="9.10" y="11.30" width="7.30" height="2.50" rx="0.86" fill="#f6cd2e"/><rect x="13.81" y="8.90" width="2.59" height="4.90" rx="1.06" fill="#f6cd2e"/></svg>
<span class="t" style="left:373px;top:77.0px;line-height:24px;font-size:15.5px;letter-spacing:0.389px;color:#bbbbbb;">main.py</span>
<svg class="i" style="left:437px;top:82px" width="14" height="14" viewBox="0 0 14 14" ><path d="M3 3l8 8M11 3l-8 8" stroke="#6e7173" stroke-width="1.100"/></svg>
<svg class="i" style="left:1266px;top:79px" width="10" height="20" viewBox="0 0 10 20" ><circle cx="5" cy="4" r="1.700" fill="#afb1b3"/><circle cx="5" cy="10" r="1.700" fill="#afb1b3"/><circle cx="5" cy="16" r="1.700" fill="#afb1b3"/></svg>
<div class="c" style="left:337px;top:106px;width:950px;height:831px;background:#2b2b2b">
<div class="b" style="left:0px;top:0px;width:93px;height:831px;background:#313335;"></div>
<div class="b" style="left:0px;top:439.25px;width:951px;height:33.75px;background:#323232;"></div>
<div class="b" style="left:93px;top:0px;width:1px;height:831px;background:#555555;"></div>
<div class="b" style="left:147px;top:147.85px;width:1px;height:236.25px;background:#393939;"></div>
<div class="b" style="left:147px;top:474.1px;width:1px;height:202.5px;background:#393939;"></div>
<div class="b" style="left:194px;top:575.35px;width:1px;height:101.25px;background:#393939;"></div>
<div class="ln" style="top:-8.75px">77</div>
<div class="ln" style="top:25.0px">78</div>
<div class="cl" style="top:25.9px"><span class="cm"># <span class="zh">敌人类</span></span></div>
<div class="ln" style="top:58.75px">79</div>
<div class="cl" style="top:59.65px"><span class="k">class</span> Enemy(pygame.sprite.Sprite):</div>
<div class="ln" style="top:115.0px">80</div>
<div class="cl" style="top:115.9px">    <span class="k">def</span> <span class="d">__init__</span>(<span class="s">self</span>):</div>
<div class="ln" style="top:148.75px">81</div>
<div class="cl" style="top:149.65px">        <span class="bi">super</span>().<span class="d">__init__</span>()</div>
<div class="ln" style="top:182.5px">82</div>
<div class="cl" style="top:183.4px">        <span class="s">self</span>.image = enemy_image</div>
<div class="ln" style="top:216.25px">83</div>
<div class="cl" style="top:217.15px">        <span class="s">self</span>.rect = <span class="s">self</span>.image.get_rect()</div>
<div class="ln" style="top:250.0px">84</div>
<div class="cl" style="top:250.9px">        <span class="s">self</span>.rect.x = random.randrange(SCREEN_WIDTH - <span class="s">self</span>.rect.width)</div>
<div class="ln" style="top:283.75px">85</div>
<div class="cl" style="top:284.65px">        <span class="s">self</span>.rect.y = random.randrange(-<span class="n">100</span><span class="k">,</span> -<span class="n">40</span>)</div>
<div class="ln" style="top:317.5px">86</div>
<div class="cl" style="top:318.4px">        <span class="s">self</span>.speedy = random.randrange(<span class="n">1</span><span class="k">,</span> <span class="n">8</span>)</div>
<div class="ln" style="top:351.25px">87</div>
<div class="cl" style="top:352.15px">        <span class="s">self</span>.speedx = random.randrange(-<span class="n">3</span><span class="k">,</span> <span class="n">3</span>)</div>
<div class="ln" style="top:385.0px">88</div>
<div class="ln" style="top:441.25px;color:#a4a3a3">89</div>
<div class="cl" style="top:442.15px">    <span class="k">def</span> <span class="f">update</span>(<span class="s">self</span>):</div>
<div class="ln" style="top:475.0px">90</div>
<div class="cl" style="top:475.9px">        <span class="s">self</span>.rect.x += <span class="s">self</span>.speedx</div>
<div class="ln" style="top:508.75px">91</div>
<div class="cl" style="top:509.65px">        <span class="s">self</span>.rect.y += <span class="s">self</span>.speedy</div>
<div class="ln" style="top:542.5px">92</div>
<div class="cl" style="top:543.4px">        <span class="k">if</span> <span class="s">self</span>.rect.top &gt; SCREEN_HEIGHT + <span class="n">10</span> <span class="k">or</span> <span class="s">self</span>.rect.left &lt; -<span class="n">25</span> <span class="k">or</span> <span class="s">self</span>.rect.right &gt; SCREEN_WIDTH + <span class="n">20</span>:</div>
<div class="ln" style="top:576.25px">93</div>
<div class="cl" style="top:577.15px">            <span class="s">self</span>.rect.x = random.randrange(SCREEN_WIDTH - <span class="s">self</span>.rect.width)</div>
<div class="ln" style="top:610.0px">94</div>
<div class="cl" style="top:610.9px">            <span class="s">self</span>.rect.y = random.randrange(-<span class="n">100</span><span class="k">,</span> -<span class="n">40</span>)</div>
<div class="ln" style="top:643.75px">95</div>
<div class="cl" style="top:644.65px">            <span class="s">self</span>.speedy = random.randrange(<span class="n">1</span><span class="k">,</span> <span class="n">8</span>)</div>
<div class="ln" style="top:677.5px">96</div>
<div class="ln" style="top:711.25px">97</div>
<div class="cl" style="top:712.15px"><span class="cm"># <span class="zh">子弹类</span></span></div>
<div class="ln" style="top:745.0px">98</div>
<div class="cl" style="top:745.9px"><span class="k">class</span> Bullet(pygame.sprite.Sprite):</div>
<div class="ln" style="top:801.25px">99</div>
<div class="cl" style="top:802.15px">    <span class="k">def</span> <span class="d">__init__</span>(<span class="s">self</span><span class="k">,</span> x<span class="k">,</span> y):</div>
<svg class="i" style="left:84.5px;top:65.95px" width="18" height="21.4" viewBox="0 0 16 19" ><path d="M1.500 1.500h13v9l-6.500 6.500-6.500-6.500z" fill="#2b2b2b" stroke="#5f6265" stroke-width="1.100"/><path d="M4.500 6.5h7" stroke="#7d8083" stroke-width="1.100"/></svg>
<svg class="i" style="left:84.5px;top:122.2px" width="18" height="21.4" viewBox="0 0 16 19" ><path d="M1.500 1.500h13v9l-6.500 6.500-6.500-6.500z" fill="#2b2b2b" stroke="#5f6265" stroke-width="1.100"/><path d="M4.500 6.5h7" stroke="#7d8083" stroke-width="1.100"/></svg>
<svg class="i" style="left:84.5px;top:356.05px" width="18" height="21.4" viewBox="0 0 16 19" ><path d="M1.500 17.500h13v-9l-6.500-6.500-6.500 6.500z" fill="#2b2b2b" stroke="#5f6265" stroke-width="1.100"/><path d="M4.500 12.5h7" stroke="#7d8083" stroke-width="1.100"/></svg>
<svg class="i" style="left:84.5px;top:448.45px" width="18" height="21.4" viewBox="0 0 16 19" ><path d="M1.500 1.500h13v9l-6.500 6.500-6.500-6.500z" fill="#2b2b2b" stroke="#5f6265" stroke-width="1.100"/><path d="M4.500 6.5h7" stroke="#7d8083" stroke-width="1.100"/></svg>
<svg class="i" style="left:84.5px;top:549.7px" width="18" height="21.4" viewBox="0 0 16 19" ><path d="M1.500 1.500h13v9l-6.500 6.500-6.500-6.500z" fill="#2b2b2b" stroke="#5f6265" stroke-width="1.100"/><path d="M4.500 6.5h7" stroke="#7d8083" stroke-width="1.100"/></svg>
<svg class="i" style="left:84.5px;top:648.55px" width="18" height="21.4" viewBox="0 0 16 19" ><path d="M1.500 17.500h13v-9l-6.500-6.500-6.500 6.500z" fill="#2b2b2b" stroke="#5f6265" stroke-width="1.100"/><path d="M4.500 12.5h7" stroke="#7d8083" stroke-width="1.100"/></svg>
<svg class="i" style="left:84.5px;top:752.2px" width="18" height="21.4" viewBox="0 0 16 19" ><path d="M1.500 1.500h13v9l-6.500 6.500-6.500-6.500z" fill="#2b2b2b" stroke="#5f6265" stroke-width="1.100"/><path d="M4.500 6.5h7" stroke="#7d8083" stroke-width="1.100"/></svg>
<svg class="i" style="left:84.5px;top:808.45px" width="18" height="21.4" viewBox="0 0 16 19" ><path d="M1.500 1.500h13v9l-6.500 6.500-6.500-6.500z" fill="#2b2b2b" stroke="#5f6265" stroke-width="1.100"/><path d="M4.500 6.5h7" stroke="#7d8083" stroke-width="1.100"/></svg>
<svg class="i" style="left:104px;top:84.55px" width="408" height="4" viewBox="0 0 408 4" ><polyline points="0,3.4 2.5,0.6 5,3.4 7.5,0.6 10,3.4 12.5,0.6 15,3.4 17.5,0.6 20,3.4 22.5,0.6 25,3.4 27.5,0.6 30,3.4 32.5,0.6 35,3.4 37.5,0.6 40,3.4 42.5,0.6 45,3.4 47.5,0.6 50,3.4 52.5,0.6 55,3.4 57.5,0.6 60,3.4 62.5,0.6 65,3.4 67.5,0.6 70,3.4 72.5,0.6 75,3.4 77.5,0.6 80,3.4 82.5,0.6 85,3.4 87.5,0.6 90,3.4 92.5,0.6 95,3.4 97.5,0.6 100,3.4 102.5,0.6 105,3.4 107.5,0.6 110,3.4 112.5,0.6 115,3.4 117.5,0.6 120,3.4 122.5,0.6 125,3.4 127.5,0.6 130,3.4 132.5,0.6 135,3.4 137.5,0.6 140,3.4 142.5,0.6 145,3.4 147.5,0.6 150,3.4 152.5,0.6 155,3.4 157.5,0.6 160,3.4 162.5,0.6 165,3.4 167.5,0.6 170,3.4 172.5,0.6 175,3.4 177.5,0.6 180,3.4 182.5,0.6 185,3.4 187.5,0.6 190,3.4 192.5,0.6 195,3.4 197.5,0.6 200,3.4 202.5,0.6 205,3.4 207.5,0.6 210,3.4 212.5,0.6 215,3.4 217.5,0.6 220,3.4 222.5,0.6 225,3.4 227.5,0.6 230,3.4 232.5,0.6 235,3.4 237.5,0.6 240,3.4 242.5,0.6 245,3.4 247.5,0.6 250,3.4 252.5,0.6 255,3.4 257.5,0.6 260,3.4 262.5,0.6 265,3.4 267.5,0.6 270,3.4 272.5,0.6 275,3.4 277.5,0.6 280,3.4 282.5,0.6 285,3.4 287.5,0.6 290,3.4 292.5,0.6 295,3.4 297.5,0.6 300,3.4 302.5,0.6 305,3.4 307.5,0.6 310,3.4 312.5,0.6 315,3.4 317.5,0.6 320,3.4 322.5,0.6 325,3.4 327.5,0.6 330,3.4 332.5,0.6 335,3.4 337.5,0.6 340,3.4 342.5,0.6 345,3.4 347.5,0.6 350,3.4 352.5,0.6 355,3.4 357.5,0.6 360,3.4 362.5,0.6 365,3.4 367.5,0.6 370,3.4 372.5,0.6 375,3.4 377.5,0.6 380,3.4 382.5,0.6 385,3.4 387.5,0.6 390,3.4 392.5,0.6 395,3.4 397.5,0.6 400,3.4 402.5,0.6 405,3.4 407.5,0.6" fill="none" stroke="#8e8e5c" stroke-width="1"/></svg>
<svg class="i" style="left:104px;top:770.8px" width="420" height="4" viewBox="0 0 420 4" ><polyline points="0,3.4 2.5,0.6 5,3.4 7.5,0.6 10,3.4 12.5,0.6 15,3.4 17.5,0.6 20,3.4 22.5,0.6 25,3.4 27.5,0.6 30,3.4 32.5,0.6 35,3.4 37.5,0.6 40,3.4 42.5,0.6 45,3.4 47.5,0.6 50,3.4 52.5,0.6 55,3.4 57.5,0.6 60,3.4 62.5,0.6 65,3.4 67.5,0.6 70,3.4 72.5,0.6 75,3.4 77.5,0.6 80,3.4 82.5,0.6 85,3.4 87.5,0.6 90,3.4 92.5,0.6 95,3.4 97.5,0.6 100,3.4 102.5,0.6 105,3.4 107.5,0.6 110,3.4 112.5,0.6 115,3.4 117.5,0.6 120,3.4 122.5,0.6 125,3.4 127.5,0.6 130,3.4 132.5,0.6 135,3.4 137.5,0.6 140,3.4 142.5,0.6 145,3.4 147.5,0.6 150,3.4 152.5,0.6 155,3.4 157.5,0.6 160,3.4 162.5,0.6 165,3.4 167.5,0.6 170,3.4 172.5,0.6 175,3.4 177.5,0.6 180,3.4 182.5,0.6 185,3.4 187.5,0.6 190,3.4 192.5,0.6 195,3.4 197.5,0.6 200,3.4 202.5,0.6 205,3.4 207.5,0.6 210,3.4 212.5,0.6 215,3.4 217.5,0.6 220,3.4 222.5,0.6 225,3.4 227.5,0.6 230,3.4 232.5,0.6 235,3.4 237.5,0.6 240,3.4 242.5,0.6 245,3.4 247.5,0.6 250,3.4 252.5,0.6 255,3.4 257.5,0.6 260,3.4 262.5,0.6 265,3.4 267.5,0.6 270,3.4 272.5,0.6 275,3.4 277.5,0.6 280,3.4 282.5,0.6 285,3.4 287.5,0.6 290,3.4 292.5,0.6 295,3.4 297.5,0.6 300,3.4 302.5,0.6 305,3.4 307.5,0.6 310,3.4 312.5,0.6 315,3.4 317.5,0.6 320,3.4 322.5,0.6 325,3.4 327.5,0.6 330,3.4 332.5,0.6 335,3.4 337.5,0.6 340,3.4 342.5,0.6 345,3.4 347.5,0.6 350,3.4 352.5,0.6 355,3.4 357.5,0.6 360,3.4 362.5,0.6 365,3.4 367.5,0.6 370,3.4 372.5,0.6 375,3.4 377.5,0.6 380,3.4 382.5,0.6 385,3.4 387.5,0.6 390,3.4 392.5,0.6 395,3.4 397.5,0.6 400,3.4 402.5,0.6 405,3.4 407.5,0.6 410,3.4 412.5,0.6 415,3.4 417.5,0.6 420,3.4" fill="none" stroke="#8e8e5c" stroke-width="1"/></svg>
<svg class="i" style="left:153px;top:91.7px" width="20.5" height="20.5" viewBox="0 0 26 26" ><polygon points="8.2,1 12.9,.5 14.5,2.900 21.900,3.200 24,7.100 25.400,15 24.600,18.200 19.800,20.900 17.200,25.400 12.400,25.900 10.800,23 3.400,21.900 1.850,18.800 .3,11.400 .8,8.200 5,6.600" fill="#7c7c7c"/><path d="M10.300 2.100L5.300 7.700l7.100 14.200M8.700 8.200h13.200l2.100 6.300M19.800 10.800L12.400 21.900M5 20.600h5.300" fill="none" stroke="#2b2b2b" stroke-width="2.5" stroke-linejoin="miter"/></svg>
<svg class="i" style="left:177px;top:95.5px" width="13" height="13" viewBox="0 0 13 13" ><path d="M1.300 4l5.200 5.200L11.700 4" fill="none" stroke="#c8c8c8" stroke-width="1.700"/></svg>
<svg class="i" style="left:153px;top:417.7px" width="20.5" height="20.5" viewBox="0 0 26 26" ><polygon points="8.2,1 12.9,.5 14.5,2.900 21.900,3.200 24,7.100 25.400,15 24.600,18.200 19.800,20.900 17.200,25.400 12.400,25.900 10.800,23 3.400,21.900 1.850,18.800 .3,11.400 .8,8.200 5,6.600" fill="#7c7c7c"/><path d="M10.300 2.100L5.300 7.700l7.100 14.200M8.700 8.200h13.200l2.100 6.300M19.800 10.800L12.400 21.900M5 20.600h5.300" fill="none" stroke="#2b2b2b" stroke-width="2.5" stroke-linejoin="miter"/></svg>
<svg class="i" style="left:177px;top:421.5px" width="13" height="13" viewBox="0 0 13 13" ><path d="M1.300 4l5.200 5.200L11.700 4" fill="none" stroke="#c8c8c8" stroke-width="1.700"/></svg>
<svg class="i" style="left:153px;top:777.7px" width="20.5" height="20.5" viewBox="0 0 26 26" ><polygon points="8.2,1 12.9,.5 14.5,2.900 21.900,3.200 24,7.100 25.400,15 24.600,18.200 19.800,20.900 17.200,25.400 12.400,25.900 10.800,23 3.400,21.900 1.850,18.800 .3,11.400 .8,8.200 5,6.600" fill="#7c7c7c"/><path d="M10.300 2.100L5.300 7.700l7.100 14.200M8.700 8.200h13.200l2.100 6.300M19.800 10.800L12.400 21.900M5 20.600h5.300" fill="none" stroke="#2b2b2b" stroke-width="2.5" stroke-linejoin="miter"/></svg>
<svg class="i" style="left:177px;top:781.5px" width="13" height="13" viewBox="0 0 13 13" ><path d="M1.300 4l5.200 5.200L11.700 4" fill="none" stroke="#c8c8c8" stroke-width="1.700"/></svg>
<svg class="i" style="left:52.3px;top:444.95px" width="24" height="22" viewBox="0 0 24 22" ><circle cx="7.500" cy="11" r="6.800" fill="#3592bd"/><circle cx="7.500" cy="11" r="2" fill="none" stroke="#313335" stroke-width="1.300"/><path d="M17.500 20V3.500M14 7l3.500-4 3.500 4" fill="none" stroke="#e05555" stroke-width="1.600"/></svg>
<div class="b" style="left:104px;top:819px;width:508px;height:9px;background:rgba(128,128,128,.5);"></div>
<div class="b" style="left:932px;top:84px;width:17.3px;height:2.8px;background:#857c5c;"></div>
<div class="b" style="left:932px;top:88.2px;width:17.3px;height:2.2px;background:#857c5c;"></div>
<div class="b" style="left:932px;top:91.8px;width:17.3px;height:2.2px;background:#857c5c;"></div>
<div class="b" style="left:932px;top:95.7px;width:17.3px;height:4.6px;background:#857c5c;"></div>
<div class="b" style="left:932px;top:101.8px;width:17.3px;height:2.5px;background:#857c5c;"></div>
<div class="b" style="left:932px;top:112.8px;width:17.3px;height:2.9px;background:#857c5c;"></div>
<div class="b" style="left:932px;top:126.7px;width:17.3px;height:2.7px;background:#857c5c;"></div>
<div class="b" style="left:932px;top:176.7px;width:17.3px;height:2.7px;background:#857c5c;"></div>
<div class="b" style="left:932px;top:227.8px;width:17.3px;height:3px;background:#857c5c;"></div>
<div class="b" style="left:932px;top:300.2px;width:17.3px;height:3px;background:#d2a010;"></div>
<div class="b" style="left:932px;top:304px;width:17.3px;height:3px;background:#d2a010;"></div>
<div class="b" style="left:937px;top:313px;width:10.3px;height:84px;background:rgba(140,140,140,.3);"></div>
<div class="b" style="left:932px;top:317.8px;width:17.3px;height:2.9px;background:#857c5c;"></div>
<div class="b" style="left:932px;top:390.2px;width:17.3px;height:3px;background:#857c5c;"></div>
<div class="b" style="left:932px;top:447.8px;width:17.3px;height:2.9px;background:#857c5c;"></div>
<div class="b" style="left:932px;top:532.2px;width:17.3px;height:2.8px;background:#857c5c;"></div>
<div class="b" style="left:932px;top:549px;width:17.3px;height:3px;background:#d2a010;"></div>
<div class="b" style="left:932px;top:563.2px;width:17.3px;height:2.7px;background:#d2a010;"></div>
<div class="b" style="left:932px;top:566.8px;width:17.3px;height:2.6px;background:#d2a010;"></div>
<div class="b" style="left:932px;top:579px;width:17.3px;height:2.8px;background:#857c5c;"></div>
<div class="b" style="left:932px;top:583px;width:17.3px;height:17.7px;background:#c23030;"></div>
<div class="b" style="left:932px;top:619px;width:17.3px;height:2.5px;background:#857c5c;"></div>
<div class="b" style="left:932px;top:621.8px;width:17.3px;height:2.5px;background:#d2a010;"></div>
<div class="b" style="left:932px;top:625.3px;width:17.3px;height:2.5px;background:#857c5c;"></div>
<div class="b" style="left:932px;top:629px;width:17.3px;height:2.8px;background:#857c5c;"></div>
<div class="b" style="left:932px;top:632.8px;width:17.3px;height:2.9px;background:#d2a010;"></div>
<div class="b" style="left:932px;top:636.8px;width:17.3px;height:2.5px;background:#d2a010;"></div>
<div class="b" style="left:932px;top:646.5px;width:17.3px;height:2.8px;background:#857c5c;"></div>
<div class="b" style="left:932px;top:654px;width:17.3px;height:3px;background:#857c5c;"></div>
<div class="b" style="left:932px;top:704px;width:17.3px;height:3px;background:#d2a010;"></div>
<div class="b" style="left:932px;top:710.2px;width:17.3px;height:3px;background:#d2a010;"></div>
<div class="b" style="left:932px;top:714px;width:17.3px;height:3px;background:#d2a010;"></div>
<div class="b" style="left:932px;top:729px;width:17.3px;height:3px;background:#d2a010;"></div>
<div class="b" style="left:932px;top:807px;width:17.3px;height:2.8px;background:#857c5c;"></div>
<svg class="i" style="left:732px;top:10px" width="14" height="14" viewBox="0 0 14 14" ><circle cx="7" cy="7" r="6.500" fill="#bb3b36"/><path d="M7 3v5M7 9.500v1.700" stroke="#2b2b2b" stroke-width="1.700"/></svg>
<span class="t" style="left:751px;top:5.5px;line-height:24px;font-size:15.5px;">5</span>
<svg class="i" style="left:770px;top:10px" width="15" height="15" viewBox="0 0 15 15" ><path d="M7.500 1L14.500 13.500H.500z" fill="#d9a420"/><path d="M7.500 5v4.500M7.500 10.800v1.600" stroke="#2b2b2b" stroke-width="1.600"/></svg>
<span class="t" style="left:788px;top:5.5px;line-height:24px;font-size:15.5px;">12</span>
<svg class="i" style="left:816px;top:10px" width="15" height="15" viewBox="0 0 15 15" ><path d="M7.500 1L14.500 13.500H.500z" fill="#8b8060"/><path d="M7.500 5v4.500M7.500 10.800v1.600" stroke="#2b2b2b" stroke-width="1.600"/></svg>
<span class="t" style="left:834px;top:5.5px;line-height:24px;font-size:15.5px;">22</span>
<svg class="i" style="left:861px;top:9px" width="16" height="17" viewBox="0 0 16 17" ><path d="M2 7l4 4 8-9" fill="none" stroke="#4aa34e" stroke-width="2.300"/><path d="M1 14l2-1.500 2 1.500 2-1.500 2 1.500 2-1.500 2 1.500" fill="none" stroke="#4aa34e" stroke-width="1.100"/></svg>
<span class="t" style="left:881px;top:5.5px;line-height:24px;font-size:15.5px;">5</span>
<svg class="i" style="left:901px;top:11px" width="14" height="14" viewBox="0 0 14 14" ><path d="M2 9.500l5-5 5 5" fill="none" stroke="#c8c8c8" stroke-width="1.500"/></svg>
<svg class="i" style="left:927px;top:11px" width="14" height="14" viewBox="0 0 14 14" ><path d="M2 4.500l5 5 5-5" fill="none" stroke="#c8c8c8" stroke-width="1.500"/></svg>
</div>
<div class="b" style="left:337px;top:937px;width:950px;height:30px;background:#313335;"></div>
<span class="t" style="left:443px;top:940.0px;line-height:24px;font-size:15.5px;letter-spacing:-0.048px;color:#bbbbbb;">Enemy</span>
<svg class="i" style="left:498px;top:946px" width="10" height="12" viewBox="0 0 10 12" ><path d="M3.500 3l3 3-3 3" fill="none" stroke="#6e7173" stroke-width="1.100"/></svg>
<span class="t" style="left:520px;top:940.0px;line-height:24px;font-size:15.5px;letter-spacing:0.533px;color:#bbbbbb;">update()</span>
<div class="c" style="left:1287px;top:72px;width:607px;height:895px;background:#3c3f41">
<div class="b" style="left:0px;top:0px;width:607px;height:33px;background:#2b2b2b;"></div>
<div class="b" style="left:1px;top:0px;width:606px;height:33px;background:#3b4754;"></div>
<div class="b" style="left:0px;top:33px;width:607px;height:1px;background:#323232;"></div>
<span class="t" style="left:8px;top:6.0px;line-height:24px;font-size:15px;color:#c3c6c9;">通义灵码</span>
<svg class="i" style="left:409px;top:6px" width="22" height="22" viewBox="0 0 22 22" ><path d="M4.300 6.500A8 8 0 1 1 3 11" fill="none" stroke="#b4b8bc" stroke-width="1.700"/><path d="M1.500 3.500l2.300 4.300 4.300-1.800" fill="none" stroke="#b4b8bc" stroke-width="1.700"/><path d="M11 6.500V11l3 2.500" fill="none" stroke="#b4b8bc" stroke-width="1.700"/></svg>
<svg class="i" style="left:441px;top:6px" width="22" height="22" viewBox="0 0 22 22" ><path d="M12 3.500H3.500v15h15V10" fill="none" stroke="#b4b8bc" stroke-width="1.700"/><path d="M8 14l1-4L17.500 1.500l3 3L12 13z" fill="#3b4754" stroke="#b4b8bc" stroke-width="1.600"/></svg>
<svg class="i" style="left:473px;top:6px" width="22" height="22" viewBox="0 0 22 22" ><circle cx="11" cy="11" r="9" fill="none" stroke="#b4b8bc" stroke-width="1.600"/><text x="11" y="15.500" text-anchor="middle" font-family="Liberation Sans,sans-serif" font-weight="700" font-size="12.500" fill="#b4b8bc">?</text></svg>
<svg class="i" style="left:505px;top:6px" width="22" height="22" viewBox="0 0 22 22" ><circle cx="7.300" cy="7.300" r="5.900" fill="#b4b8bc"/><path d="M9 9l9.800 9.800" stroke="#b4b8bc" stroke-width="5.800" stroke-linecap="round"/><circle cx="7.300" cy="7.300" r="4.300" fill="#3b4754"/><path d="M9.500 9.500l9.300 9.300" stroke="#3b4754" stroke-width="2.600" stroke-linecap="round"/><path d="M7.300 7.300L-1 3.500 3.500-1z" fill="#3b4754"/><path d="M2.600 4.800l3.600 1.600.6 .1M4.800 2.600l1.600 3.600" stroke="#b4b8bc" stroke-width="1.500" fill="none"/></svg>
<div class="b" style="left:537px;top:5px;width:1px;height:24px;background:#4d5a68;"></div>
<svg class="i" style="left:549px;top:8px" width="18" height="18" viewBox="0 0 20 20" ><rect x="8.100" y="0.900" width="3.800" height="4.500" rx=".5" fill="#b4b8bc" transform="rotate(0 10 10)"/><rect x="8.100" y="0.900" width="3.800" height="4.500" rx=".5" fill="#b4b8bc" transform="rotate(45 10 10)"/><rect x="8.100" y="0.900" width="3.800" height="4.500" rx=".5" fill="#b4b8bc" transform="rotate(90 10 10)"/><rect x="8.100" y="0.900" width="3.800" height="4.500" rx=".5" fill="#b4b8bc" transform="rotate(135 10 10)"/><rect x="8.100" y="0.900" width="3.800" height="4.500" rx=".5" fill="#b4b8bc" transform="rotate(180 10 10)"/><rect x="8.100" y="0.900" width="3.800" height="4.500" rx=".5" fill="#b4b8bc" transform="rotate(225 10 10)"/><rect x="8.100" y="0.900" width="3.800" height="4.500" rx=".5" fill="#b4b8bc" transform="rotate(270 10 10)"/><rect x="8.100" y="0.900" width="3.800" height="4.500" rx=".5" fill="#b4b8bc" transform="rotate(315 10 10)"/><circle cx="10" cy="10" r="6.500" fill="#b4b8bc"/><circle cx="10" cy="10" r="3.300" fill="#3b4754"/></svg>
<svg class="i" style="left:580px;top:7px" width="20" height="20" viewBox="0 0 20 20" ><path d="M2 10h16" stroke="#b4b8bc" stroke-width="2"/></svg>
<div class="b" style="left:0px;top:84px;width:607px;height:1px;background:#2b2b2b;"></div>
<span class="t" style="left:16px;top:49.0px;line-height:24px;font-size:14.8px;color:#bbbbbb;">智能问答</span>
<span class="t" style="left:116px;top:49.0px;line-height:24px;font-size:15px;letter-spacing:-0.057px;color:#c8ccd0;">AI 程序员</span>
<div class="b" style="left:115px;top:81.5px;width:64px;height:2.5px;background:#4a88c7;"></div>
<svg class="i" style="left:388px;top:49px" width="22" height="22" viewBox="0 0 22 22" ><circle cx="11" cy="11" r="9.200" fill="none" stroke="#b4b8bc" stroke-width="1.500"/><path d="M11 6.500v9M6.500 11h9" stroke="#b4b8bc" stroke-width="1.500"/></svg>
<div class="b" style="left:430px;top:49px;width:2px;height:21px;background:#2b2b2b;"></div>
<svg class="i" style="left:458px;top:49px" width="22" height="22" viewBox="0 0 22 22" ><circle cx="11" cy="7" r="4.300" fill="none" stroke="#b4b8bc" stroke-width="1.600"/><path d="M2.500 20.500c0-5 3.500-8 8.500-8s8.500 3 8.500 8" fill="none" stroke="#b4b8bc" stroke-width="1.600"/></svg>
<span class="t" style="left:487px;top:49.0px;line-height:24px;font-size:15px;color:#bbbbbb;">北京宏哥</span>
<svg class="i" style="left:563px;top:55px" width="14" height="10" viewBox="0 0 14 10" ><path d="M1 1.500h12L7 8.500z" fill="#b4b8bc"/></svg>
<div class="c" style="left:0;top:85px;width:607px;height:537px">
<div class="b" style="left:16px;top:-20px;width:558px;height:55px;background:#35373a;border-radius:11px"></div>
<div class="b" style="left:31px;top:-10px;width:528px;height:30px;background:#3d4043;border-radius:5px"></div>
<svg class="i" style="left:41px;top:-5px" width="22.5" height="22.5" viewBox="0 0 18 18" ><path d="M7 1h6v6.400H6.600V15H3V5h4z" fill="#9aa7b0" fill-opacity=".8"/><path d="M6.200 1L3 4.200h3.200z" fill="#9aa7b0" fill-opacity=".5"/><rect x="9.10" y="6.60" width="4.99" height="4.90" rx="1.06" fill="#3d8cc4"/><rect x="6.80" y="9.00" width="7.30" height="2.50" rx="0.86" fill="#3d8cc4"/><rect x="6.80" y="9.00" width="2.59" height="4.90" rx="1.06" fill="#3d8cc4"/><rect x="9.10" y="11.30" width="4.99" height="4.90" rx="1.06" fill="#f6cd2e"/><rect x="9.10" y="11.30" width="7.30" height="2.50" rx="0.86" fill="#f6cd2e"/><rect x="13.81" y="8.90" width="2.59" height="4.90" rx="1.06" fill="#f6cd2e"/></svg>
<span class="t" style="left:71px;top:-6.0px;line-height:24px;font-size:16.5px;letter-spacing:0.318px;">main.py</span>
<span class="t" style="left:422px;top:-7.0px;line-height:24px;font-size:15.5px;letter-spacing:0.168px;color:#6f7275;">7 / 7</span>
<svg class="i" style="left:474px;top:-4px" width="18" height="18" viewBox="0 0 18 18" ><circle cx="9" cy="9" r="7.300" fill="none" stroke="#3fa34d" stroke-width="1.500"/><path d="M5.500 9l2.500 2.500 4.500-4.500" fill="none" stroke="#3fa34d" stroke-width="1.500"/></svg>
<span class="t" style="left:500px;top:-6.0px;line-height:24px;font-size:15px;color:#6f7275;">已接受</span>
<div class="b" style="left:16px;top:46px;width:558px;height:142px;background:#35373a;border-radius:11px"></div>
<div class="b" style="left:30.5px;top:58px;width:25px;height:25px;background:#fa9f35;border-radius:50%"></div>
<span class="t" style="left:36px;top:59.5px;line-height:24px;font-size:14px;color:#ffffff;font-weight:700;">北</span>
<span class="t" style="left:66px;top:60.0px;line-height:24px;font-size:15px;color:#c0c3c6;">北京宏哥</span>
<div class="b" style="left:31px;top:97px;width:99px;height:26px;background:#3d4043;border-radius:5px"></div>
<svg class="i" style="left:35px;top:99px" width="22.5" height="22.5" viewBox="0 0 18 18" ><path d="M7 1h6v6.400H6.600V15H3V5h4z" fill="#9aa7b0" fill-opacity=".8"/><path d="M6.200 1L3 4.200h3.200z" fill="#9aa7b0" fill-opacity=".5"/><rect x="9.10" y="6.60" width="4.99" height="4.90" rx="1.06" fill="#3d8cc4"/><rect x="6.80" y="9.00" width="7.30" height="2.50" rx="0.86" fill="#3d8cc4"/><rect x="6.80" y="9.00" width="2.59" height="4.90" rx="1.06" fill="#3d8cc4"/><rect x="9.10" y="11.30" width="4.99" height="4.90" rx="1.06" fill="#f6cd2e"/><rect x="9.10" y="11.30" width="7.30" height="2.50" rx="0.86" fill="#f6cd2e"/><rect x="13.81" y="8.90" width="2.59" height="4.90" rx="1.06" fill="#f6cd2e"/></svg>
<span class="t" style="left:66.5px;top:98.5px;line-height:24px;font-size:15.5px;letter-spacing:0.389px;">main.py</span>
<div class="b" style="left:31px;top:137.5px;width:528px;height:1px;background:#434649;"></div>
<span class="t" style="left:31px;top:151.0px;line-height:24px;font-size:16px;color:#c0c3c6;">编写单元测试</span>
<div class="b" style="left:16px;top:199px;width:558px;height:380px;background:#35373a;border-radius:11px"></div>
<svg class="i" style="left:30.5px;top:211.5px" width="26" height="26" viewBox="0 0 26 26" ><polygon points="8.2,1 12.9,.5 14.5,2.900 21.900,3.200 24,7.100 25.400,15 24.600,18.200 19.800,20.900 17.200,25.400 12.400,25.900 10.800,23 3.400,21.900 1.850,18.800 .3,11.400 .8,8.200 5,6.600" fill="#6a55f3"/><path d="M10.300 2.100L5.300 7.700l7.100 14.200M8.700 8.200h13.200l2.100 6.300M19.800 10.800L12.400 21.900M5 20.600h5.300" fill="none" stroke="#ffffff" stroke-width="1.9" stroke-linejoin="miter"/></svg>
<span class="t" style="left:62px;top:213.5px;line-height:24px;font-size:15px;color:#c8cbce;">通义灵码</span>
<span class="t" style="left:134px;top:213.0px;line-height:24px;font-size:15px;letter-spacing:-0.081px;color:#7e8184;">@AI 程序员</span>
<div class="p" style="left:31px;top:268.65px">根据需求，我们需要为 <span class="ic">main.py</span> 文件中的部分功能编写单元测试。由于</div>
<div class="p" style="left:31px;top:297.65px"><span class="ic">main.py</span> 文件中包含游戏逻辑和图形界面的初始化，直接编写单元测试可能</div>
<div class="p" style="left:31px;top:326.15px">会比较复杂。我们可以先为一些独立的类和函数编写单元测试。这里我们</div>
<div class="p" style="left:31px;top:354.65px">选择为 <span class="ic">Player</span> 类和 <span class="ic">Enemy</span> 类编写单元测试。</div>
<div class="p" style="left:31px;top:388.65px">首先，我们需要创建一个新的测试文件 <span class="ic">test_main.py</span>，并在其中编写测试</div>
<div class="p" style="left:31px;top:417.65px">代码。</div>
<div class="b" style="left:31px;top:464px;width:528px;height:30px;background:#3d4043;border-radius:5px"></div>
<svg class="i" style="left:41px;top:468.5px" width="22.5" height="22.5" viewBox="0 0 18 18" ><path d="M7 1h6v6.400H6.600V15H3V5h4z" fill="#9aa7b0" fill-opacity=".8"/><path d="M6.200 1L3 4.200h3.200z" fill="#9aa7b0" fill-opacity=".5"/><rect x="9.10" y="6.60" width="4.99" height="4.90" rx="1.06" fill="#3d8cc4"/><rect x="6.80" y="9.00" width="7.30" height="2.50" rx="0.86" fill="#3d8cc4"/><rect x="6.80" y="9.00" width="2.59" height="4.90" rx="1.06" fill="#3d8cc4"/><rect x="9.10" y="11.30" width="4.99" height="4.90" rx="1.06" fill="#f6cd2e"/><rect x="9.10" y="11.30" width="7.30" height="2.50" rx="0.86" fill="#f6cd2e"/><rect x="13.81" y="8.90" width="2.59" height="4.90" rx="1.06" fill="#f6cd2e"/></svg>
<span class="t" style="left:71px;top:467.5px;line-height:24px;font-size:16.5px;letter-spacing:0.121px;">test_main.py</span>
<svg class="i" style="left:475px;top:470px" width="18" height="18" viewBox="0 0 18 18" ><path d="M9 1.500v4" stroke="#6f7275" stroke-width="1.700" stroke-opacity="0.35" transform="rotate(0 9 9)"/><path d="M9 1.500v4" stroke="#6f7275" stroke-width="1.700" stroke-opacity="0.63" transform="rotate(45 9 9)"/><path d="M9 1.500v4" stroke="#6f7275" stroke-width="1.700" stroke-opacity="0.91" transform="rotate(90 9 9)"/><path d="M9 1.500v4" stroke="#6f7275" stroke-width="1.700" stroke-opacity="0.44" transform="rotate(135 9 9)"/><path d="M9 1.500v4" stroke="#6f7275" stroke-width="1.700" stroke-opacity="0.72" transform="rotate(180 9 9)"/><path d="M9 1.500v4" stroke="#6f7275" stroke-width="1.700" stroke-opacity="1.00" transform="rotate(225 9 9)"/><path d="M9 1.500v4" stroke="#6f7275" stroke-width="1.700" stroke-opacity="0.54" transform="rotate(270 9 9)"/><path d="M9 1.500v4" stroke="#6f7275" stroke-width="1.700" stroke-opacity="0.81" transform="rotate(315 9 9)"/></svg>
<span class="t" style="left:499px;top:468.0px;line-height:24px;font-size:15px;color:#6f7275;">生成中</span>
<div class="b" style="left:16px;top:509.5px;width:558px;height:1.5px;background:#3f4245;"></div>
<svg class="i" style="left:32px;top:525px" width="22" height="22" viewBox="0 0 22 22" ><circle cx="11" cy="11" r="9" fill="none" stroke="#b4b8bc" stroke-width="2.400"/><circle cx="11" cy="11" r="4" fill="#b4b8bc"/></svg>
<span class="t" style="left:60px;top:527.0px;line-height:24px;font-size:15px;color:#6f7275;">生成中</span>
<div class="b" style="left:484px;top:522px;width:75px;height:30px;background:#3d4043;border-radius:5px"></div>
<svg class="i" style="left:495px;top:527px" width="20" height="20" viewBox="0 0 20 20" ><circle cx="10" cy="10" r="8" fill="none" stroke="#9da0a3" stroke-width="1.500"/><path d="M8 6.500v7M12 6.500v7" stroke="#9da0a3" stroke-width="1.500"/></svg>
<span class="t" style="left:519px;top:527.0px;line-height:24px;font-size:15px;color:#9da0a3;">停止</span>
</div>
<div class="b" style="left:595px;top:585px;width:10px;height:33px;background:rgba(128,128,128,.45);"></div>
<div class="b" style="left:15.5px;top:627.5px;width:575.5px;height:118px;background:#2b2b2b;border-radius:11px 11px 0 0"></div>
<div class="b" style="left:15.5px;top:667px;width:575.5px;height:1px;background:#3a3c3e;"></div>
<svg class="i" style="left:33px;top:640px" width="14" height="14" viewBox="0 0 14 14" ><path d="M2.500 5l4.500 4.500L11.500 5" fill="none" stroke="#b4b8bc" stroke-width="1.500"/></svg>
<span class="t" style="left:56px;top:636.0px;line-height:24px;font-size:15.5px;color:#c0c3c6;">工作区</span>
<span class="t" style="left:118px;top:635.5px;line-height:24px;font-size:14.5px;color:#a9acaf;">最新</span>
<svg class="i" style="left:156px;top:640px" width="14" height="14" viewBox="0 0 14 14" ><path d="M2.500 5l4.500 4.500L11.500 5" fill="none" stroke="#b4b8bc" stroke-width="1.500"/></svg>
<svg class="i" style="left:508px;top:638px" width="18" height="18" viewBox="0 0 18 18" ><path d="M9 1.500v4" stroke="#6f7275" stroke-width="1.700" stroke-opacity="0.35" transform="rotate(0 9 9)"/><path d="M9 1.500v4" stroke="#6f7275" stroke-width="1.700" stroke-opacity="0.63" transform="rotate(45 9 9)"/><path d="M9 1.500v4" stroke="#6f7275" stroke-width="1.700" stroke-opacity="0.91" transform="rotate(90 9 9)"/><path d="M9 1.500v4" stroke="#6f7275" stroke-width="1.700" stroke-opacity="0.44" transform="rotate(135 9 9)"/><path d="M9 1.500v4" stroke="#6f7275" stroke-width="1.700" stroke-opacity="0.72" transform="rotate(180 9 9)"/><path d="M9 1.500v4" stroke="#6f7275" stroke-width="1.700" stroke-opacity="1.00" transform="rotate(225 9 9)"/><path d="M9 1.500v4" stroke="#6f7275" stroke-width="1.700" stroke-opacity="0.54" transform="rotate(270 9 9)"/><path d="M9 1.500v4" stroke="#6f7275" stroke-width="1.700" stroke-opacity="0.81" transform="rotate(315 9 9)"/></svg>
<span class="t" style="left:532px;top:635.5px;line-height:24px;font-size:15px;color:#7e8184;">生成中</span>
<svg class="i" style="left:31px;top:677.5px" width="22.5" height="22.5" viewBox="0 0 18 18" ><path d="M7 1h6v6.400H6.600V15H3V5h4z" fill="#9aa7b0" fill-opacity=".8"/><path d="M6.200 1L3 4.200h3.200z" fill="#9aa7b0" fill-opacity=".5"/><rect x="9.10" y="6.60" width="4.99" height="4.90" rx="1.06" fill="#3d8cc4"/><rect x="6.80" y="9.00" width="7.30" height="2.50" rx="0.86" fill="#3d8cc4"/><rect x="6.80" y="9.00" width="2.59" height="4.90" rx="1.06" fill="#3d8cc4"/><rect x="9.10" y="11.30" width="4.99" height="4.90" rx="1.06" fill="#f6cd2e"/><rect x="9.10" y="11.30" width="7.30" height="2.50" rx="0.86" fill="#f6cd2e"/><rect x="13.81" y="8.90" width="2.59" height="4.90" rx="1.06" fill="#f6cd2e"/></svg>
<span class="t" style="left:61px;top:676.0px;line-height:24px;font-size:16.5px;letter-spacing:0.318px;color:#c8cbce;">main.py</span>
<svg class="i" style="left:508px;top:678.5px" width="18" height="18" viewBox="0 0 18 18" ><circle cx="9" cy="9" r="7.300" fill="none" stroke="#3fa34d" stroke-width="1.500"/><path d="M5.500 9l2.500 2.500 4.500-4.500" fill="none" stroke="#3fa34d" stroke-width="1.500"/></svg>
<span class="t" style="left:532px;top:676.5px;line-height:24px;font-size:15px;color:#8a8d90;">已接受</span>
<svg class="i" style="left:31px;top:712.5px" width="22.5" height="22.5" viewBox="0 0 18 18" ><path d="M7 1h6v6.400H6.600V15H3V5h4z" fill="#9aa7b0" fill-opacity=".8"/><path d="M6.200 1L3 4.200h3.200z" fill="#9aa7b0" fill-opacity=".5"/><rect x="9.10" y="6.60" width="4.99" height="4.90" rx="1.06" fill="#3d8cc4"/><rect x="6.80" y="9.00" width="7.30" height="2.50" rx="0.86" fill="#3d8cc4"/><rect x="6.80" y="9.00" width="2.59" height="4.90" rx="1.06" fill="#3d8cc4"/><rect x="9.10" y="11.30" width="4.99" height="4.90" rx="1.06" fill="#f6cd2e"/><rect x="9.10" y="11.30" width="7.30" height="2.50" rx="0.86" fill="#f6cd2e"/><rect x="13.81" y="8.90" width="2.59" height="4.90" rx="1.06" fill="#f6cd2e"/></svg>
<span class="t" style="left:61px;top:711.0px;line-height:24px;font-size:16.5px;letter-spacing:0.121px;color:#c8cbce;">test_main.py</span>
<svg class="i" style="left:508px;top:713.5px" width="18" height="18" viewBox="0 0 18 18" ><path d="M9 1.500v4" stroke="#6f7275" stroke-width="1.700" stroke-opacity="0.35" transform="rotate(0 9 9)"/><path d="M9 1.500v4" stroke="#6f7275" stroke-width="1.700" stroke-opacity="0.63" transform="rotate(45 9 9)"/><path d="M9 1.500v4" stroke="#6f7275" stroke-width="1.700" stroke-opacity="0.91" transform="rotate(90 9 9)"/><path d="M9 1.500v4" stroke="#6f7275" stroke-width="1.700" stroke-opacity="0.44" transform="rotate(135 9 9)"/><path d="M9 1.500v4" stroke="#6f7275" stroke-width="1.700" stroke-opacity="0.72" transform="rotate(180 9 9)"/><path d="M9 1.500v4" stroke="#6f7275" stroke-width="1.700" stroke-opacity="1.00" transform="rotate(225 9 9)"/><path d="M9 1.500v4" stroke="#6f7275" stroke-width="1.700" stroke-opacity="0.54" transform="rotate(270 9 9)"/><path d="M9 1.500v4" stroke="#6f7275" stroke-width="1.700" stroke-opacity="0.81" transform="rotate(315 9 9)"/></svg>
<span class="t" style="left:532px;top:711.5px;line-height:24px;font-size:15px;color:#7e8184;">生成中</span>
<div class="b" style="left:0px;top:745.5px;width:607px;height:1px;background:#4a4d4f;"></div>
<div class="b" style="left:16.299999999999955px;top:760px;width:574.7px;height:121.5px;background:#2b2b2b;border:2px solid #38699c;border-radius:9px;box-sizing:border-box"></div>
<div class="b" style="left:31px;top:772px;width:24px;height:24px;background:#3c3f41;border-radius:4px"></div>
<svg class="i" style="left:34px;top:775px" width="18" height="18" viewBox="0 0 18 18" ><path d="M9 2.500v13M2.500 9h13" stroke="#c8cbce" stroke-width="1.500"/></svg>
<div class="b" style="left:61px;top:771px;width:119px;height:26px;background:#3c3f41;border-radius:4px"></div>
<svg class="i" style="left:67px;top:773px" width="22.5" height="22.5" viewBox="0 0 18 18" ><path d="M7 1h6v6.400H6.600V15H3V5h4z" fill="#9aa7b0" fill-opacity=".8"/><path d="M6.200 1L3 4.200h3.200z" fill="#9aa7b0" fill-opacity=".5"/><rect x="9.10" y="6.60" width="4.99" height="4.90" rx="1.06" fill="#3d8cc4"/><rect x="6.80" y="9.00" width="7.30" height="2.50" rx="0.86" fill="#3d8cc4"/><rect x="6.80" y="9.00" width="2.59" height="4.90" rx="1.06" fill="#3d8cc4"/><rect x="9.10" y="11.30" width="4.99" height="4.90" rx="1.06" fill="#f6cd2e"/><rect x="9.10" y="11.30" width="7.30" height="2.50" rx="0.86" fill="#f6cd2e"/><rect x="13.81" y="8.90" width="2.59" height="4.90" rx="1.06" fill="#f6cd2e"/></svg>
<span class="t" style="left:96px;top:771.5px;line-height:24px;font-size:15.5px;letter-spacing:0.389px;color:#c8cbce;">main.py</span>
<svg class="i" style="left:159px;top:776px" width="13" height="13" viewBox="0 0 13 13" ><path d="M2.500 2.500l8 8M10.500 2.500l-8 8" stroke="#6e7173" stroke-width="1.100"/></svg>
<span class="t" style="left:33px;top:848.0px;line-height:24px;font-size:15.5px;letter-spacing:0.404px;color:#9da0a3;">qwen-2.5</span>
<svg class="i" style="left:106px;top:853px" width="14" height="14" viewBox="0 0 14 14" ><path d="M2.500 4.500l4.500 4.500 4.500-4.500" fill="none" stroke="#b4b8bc" stroke-width="1.500"/></svg>
<span class="t" style="left:354px;top:849.5px;line-height:24px;font-size:15px;letter-spacing:0.487px;color:#6b6e71;">Ctrl+Enter 换行/Enter 发送</span>
<svg class="i" style="left:555px;top:851px" width="20" height="18" viewBox="0 0 20 18" ><path d="M1 9h17M12 3l6 6-6 6" fill="none" stroke="#6b6e71" stroke-width="1.500"/></svg>
</div>
<div class="b" style="left:1894px;top:72px;width:26px;height:895px;background:#3c3f41;"></div>
<div class="b" style="left:1893px;top:72px;width:1px;height:895px;background:#323232;"></div>
<div class="b" style="left:1894px;top:270px;width:26px;height:99px;background:#2d2f30;"></div>
<svg class="i" style="left:1898px;top:85px" width="17" height="18" viewBox="0 0 17 18" ><ellipse cx="8.500" cy="3.500" rx="6.500" ry="2.500" fill="#afb1b3"/><path d="M2 5.500c1 1.800 12 1.800 13 0v2.500c-1 1.800-12 1.800-13 0zM2 9.500c1 1.800 12 1.800 13 0V12c-1 1.800-12 1.800-13 0zM2 13.500c1 1.800 12 1.800 13 0V16c-1 1.800-12 1.800-13 0z" fill="#afb1b3"/></svg>
<span class="t" style="left:1877.5px;top:124.5px;line-height:20px;font-size:14px;letter-spacing:-0.616px;color:#bbbbbb;transform:rotate(90deg);transform-origin:50% 50%;width:55px;">Database</span>
<svg class="i" style="left:1899px;top:191px" width="16" height="14" viewBox="0 0 16 14" ><path d="M1 1h4v3H1zM6 1h4v3H6zM11 1h4v3h-4zM1 5.500h4v3H1zM6 5.500h4v3H6zM11 5.500h4v3h-4zM1 10h4v3H1zM6 10h4v3H6zM11 10h4v3h-4z" fill="#afb1b3"/></svg>
<span class="t" style="left:1882.5px;top:224.5px;line-height:20px;font-size:14px;letter-spacing:-0.649px;color:#bbbbbb;transform:rotate(90deg);transform-origin:50% 50%;width:45px;">SciView</span>
<svg class="i" style="left:1898.5px;top:283.5px" width="18" height="18" viewBox="0 0 26 26" ><polygon points="8.2,1 12.9,.5 14.5,2.900 21.900,3.200 24,7.100 25.400,15 24.600,18.200 19.800,20.900 17.200,25.400 12.400,25.900 10.800,23 3.400,21.900 1.850,18.800 .3,11.400 .8,8.200 5,6.600" fill="#c4c6c8"/><path d="M10.300 2.100L5.300 7.700l7.100 14.200M8.700 8.200h13.200l2.100 6.300M19.800 10.800L12.400 21.900M5 20.600h5.300" fill="none" stroke="#2d2f30" stroke-width="2.6" stroke-linejoin="miter"/></svg>
<span class="t" style="left:1880px;top:320.0px;line-height:20px;font-size:13px;color:#f0f0f0;transform:rotate(90deg);transform-origin:50% 50%;width:52px;">通义灵码</span>
<div class="b" style="left:0px;top:967px;width:1920px;height:1px;background:#323232;"></div>
<div class="b" style="left:0px;top:995px;width:1920px;height:1px;background:#323232;"></div>
<svg class="i" style="left:41px;top:973px" width="16" height="18" viewBox="0 0 16 18" ><circle cx="4.500" cy="3.500" r="2.300" fill="#afb1b3"/><circle cx="11.500" cy="5" r="2.300" fill="#afb1b3"/><path d="M4.500 4v12M11.500 6c0 4-7 3-7 7" fill="none" stroke="#afb1b3" stroke-width="1.700"/></svg>
<span class="t" style="left:63px;top:970.5px;line-height:24px;font-size:14.5px;letter-spacing:-0.209px;">Version Control</span>
<svg class="i" style="left:186px;top:975px" width="14" height="15" viewBox="0 0 14 15" ><path d="M2 1.500l10 6-10 6z" fill="#afb1b3"/></svg>
<span class="t" style="left:206px;top:970.5px;line-height:24px;font-size:14.5px;letter-spacing:-0.867px;">Run</span>
<svg class="i" style="left:254px;top:973px" width="18" height="18" viewBox="0 0 22 22" ><ellipse cx="11" cy="12.500" rx="5.500" ry="6.500" fill="#afb1b3"/><circle cx="11" cy="5.500" r="3.200" fill="#afb1b3"/><path d="M2.500 8.500l4 2M19.500 8.500l-4 2M2 13h4M20 13h-4M2.500 18l4-2M19.500 18l-4-2" stroke="#afb1b3" stroke-width="1.800"/></svg>
<span class="t" style="left:275px;top:970.5px;line-height:24px;font-size:14.5px;letter-spacing:-0.346px;">Debug</span>
<svg class="i" style="left:342px;top:974px" width="16" height="16" viewBox="0 0 16 16" ><path d="M1 3h2.500M1 7.500h2.500M1 12h2.500" stroke="#afb1b3" stroke-width="2.200"/><path d="M5.500 3H15M5.500 7.500H15M5.500 12H15" stroke="#afb1b3" stroke-width="2.200"/></svg>
<span class="t" style="left:363px;top:970.5px;line-height:24px;font-size:14.5px;letter-spacing:-0.656px;">TODO</span>
<svg class="i" style="left:427px;top:974px" width="15" height="15" viewBox="0 0 15 15" ><circle cx="7.500" cy="7.500" r="6.800" fill="#afb1b3"/><path d="M7.500 3.500v5M7.500 10v1.800" stroke="#3c3f41" stroke-width="1.800"/></svg>
<span class="t" style="left:448px;top:970.5px;line-height:24px;font-size:14.5px;letter-spacing:-0.531px;">Problems</span>
<svg class="i" style="left:532px;top:974px" width="16" height="15" viewBox="0 0 16 15" ><rect x=".5" y="1" width="15" height="13" fill="#afb1b3"/><path d="M3.500 4.500l3 2.500-3 2.500M8 11h4.500" fill="none" stroke="#3c3f41" stroke-width="1.500"/></svg>
<span class="t" style="left:553px;top:970.5px;line-height:24px;font-size:14.5px;letter-spacing:-0.349px;">Terminal</span>
<svg class="i" style="left:632px;top:973px" width="18" height="18" viewBox="0 0 18 18" ><path d="M9 1.500l7.500 3.500L9 8.500 1.500 5z" fill="#afb1b3"/><path d="M1.500 8.500L9 12l7.500-3.500M1.500 12L9 15.500l7.500-3.500" fill="none" stroke="#afb1b3" stroke-width="1.700"/></svg>
<span class="t" style="left:654px;top:970.5px;line-height:24px;font-size:14.5px;letter-spacing:-0.523px;">Python Packages</span>
<svg class="i" style="left:789px;top:973px" width="18" height="18" viewBox="0 0 10 10" ><rect x="2.66" y="0.50" width="4.68" height="4.59" rx="0.99" fill="#afb1b3"/><rect x="0.50" y="2.75" width="6.84" height="2.34" rx="0.81" fill="#afb1b3"/><rect x="0.50" y="2.75" width="2.43" height="4.59" rx="0.99" fill="#afb1b3"/><rect x="2.66" y="4.91" width="4.68" height="4.59" rx="0.99" fill="#8f9294"/><rect x="2.66" y="4.91" width="6.84" height="2.34" rx="0.81" fill="#8f9294"/><rect x="7.07" y="2.66" width="2.43" height="4.59" rx="0.99" fill="#8f9294"/></svg>
<span class="t" style="left:811px;top:970.5px;line-height:24px;font-size:14.5px;letter-spacing:-0.384px;">Python Console</span>
<div class="b" style="left:1799px;top:975px;width:15px;height:15px;background:#f0a732;border-radius:8px 8px 8px 3px"></div>
<span class="t" style="left:1803.5px;top:974.5px;line-height:16px;font-size:11.5px;color:#2b2b2b;font-weight:700;">5</span>
<span class="t" style="left:1820px;top:970.5px;line-height:24px;font-size:14.5px;letter-spacing:-0.478px;">Event Log</span>
<svg class="i" style="left:8px;top:999px" width="16" height="16" viewBox="0 0 16 16" ><path d="M3.500 3.500h10v10h-10z" fill="none" stroke="#afb1b3" stroke-width="1.300"/><path d="M1.500 5.500v9h9" fill="none" stroke="#afb1b3" stroke-width="1.300"/></svg>
<span class="t" style="left:34px;top:995.5px;line-height:24px;font-size:15.5px;letter-spacing:0.313px;">License expired: </span>
<span class="t" style="left:156.5px;top:995.5px;line-height:24px;font-size:15.5px;letter-spacing:0.498px;">Your PyCharm </span>
<span class="t" style="left:267.5px;top:995.5px;line-height:24px;font-size:15.5px;letter-spacing:0.366px;">subscription expired on </span>
<span class="t" style="left:440px;top:995.5px;line-height:24px;font-size:15.5px;letter-spacing:0.603px;">2023/12/31.If you don't </span>
<span class="t" style="left:616px;top:995.5px;line-height:24px;font-size:15.5px;letter-spacing:0.479px;">renew it before </span>
<span class="t" style="left:730.5px;top:995.5px;line-height:24px;font-size:15.5px;letter-spacing:0.631px;">2297/10/15, you will no </span>
<span class="t" style="left:908.5px;top:995.5px;line-height:24px;font-size:15.5px;letter-spacing:0.11px;">longer be able to use </span>
<span class="t" style="left:1060px;top:995.5px;line-height:24px;font-size:15.5px;letter-spacing:0.316px;">the p... (30 minutes ag</span>
<span class="t" style="left:1246px;top:996.5px;line-height:24px;font-size:14.5px;letter-spacing:0.235px;color:#bbbbbb;">生成中...</span>
<div class="b" style="left:1314px;top:1005.5px;width:182px;height:4px;background:#8c8e90;border-radius:2px"></div>
<svg class="i" style="left:1504px;top:1000px" width="15" height="15" viewBox="0 0 15 15" ><circle cx="7.500" cy="7.500" r="7" fill="#6e7173"/><path d="M4.800 4.800l5.400 5.400M10.200 4.800l-5.400 5.400" stroke="#3c3f41" stroke-width="1.500"/></svg>
<span class="t" style="left:1534px;top:995.5px;line-height:24px;font-size:15.5px;letter-spacing:0.242px;">89:22</span>
<span class="t" style="left:1589px;top:995.5px;line-height:24px;font-size:15.5px;letter-spacing:-1.044px;">LF</span>
<span class="t" style="left:1620px;top:995.5px;line-height:24px;font-size:15.5px;letter-spacing:-0.183px;">UTF-8</span>
<span class="t" style="left:1678px;top:995.5px;line-height:24px;font-size:15.5px;letter-spacing:-0.005px;">4 spaces</span>
<span class="t" style="left:1755px;top:995.5px;line-height:24px;font-size:15.5px;letter-spacing:0.297px;">Python 3.10</span>
<svg class="i" style="left:1853px;top:998px" width="18" height="18" viewBox="0 0 18 18" ><rect x="6" y="8.500" width="10" height="7.500" fill="#c8c8c8"/><path d="M3 8.500V6a3 3 0 0 1 6 0v2.500" fill="none" stroke="#c8c8c8" stroke-width="1.800"/></svg>
<svg class="i" style="left:1884px;top:996px" width="22" height="22" viewBox="0 0 26 26" ><polygon points="8.2,1 12.9,.5 14.5,2.900 21.900,3.200 24,7.100 25.400,15 24.600,18.200 19.800,20.900 17.200,25.400 12.400,25.900 10.800,23 3.400,21.900 1.850,18.800 .3,11.400 .8,8.200 5,6.600" fill="#6a55f3"/><path d="M10.300 2.100L5.300 7.700l7.100 14.200M8.700 8.200h13.200l2.100 6.300M19.800 10.800L12.400 21.900M5 20.600h5.300" fill="none" stroke="#ffffff" stroke-width="2" stroke-linejoin="miter"/></svg>
</body></html>
